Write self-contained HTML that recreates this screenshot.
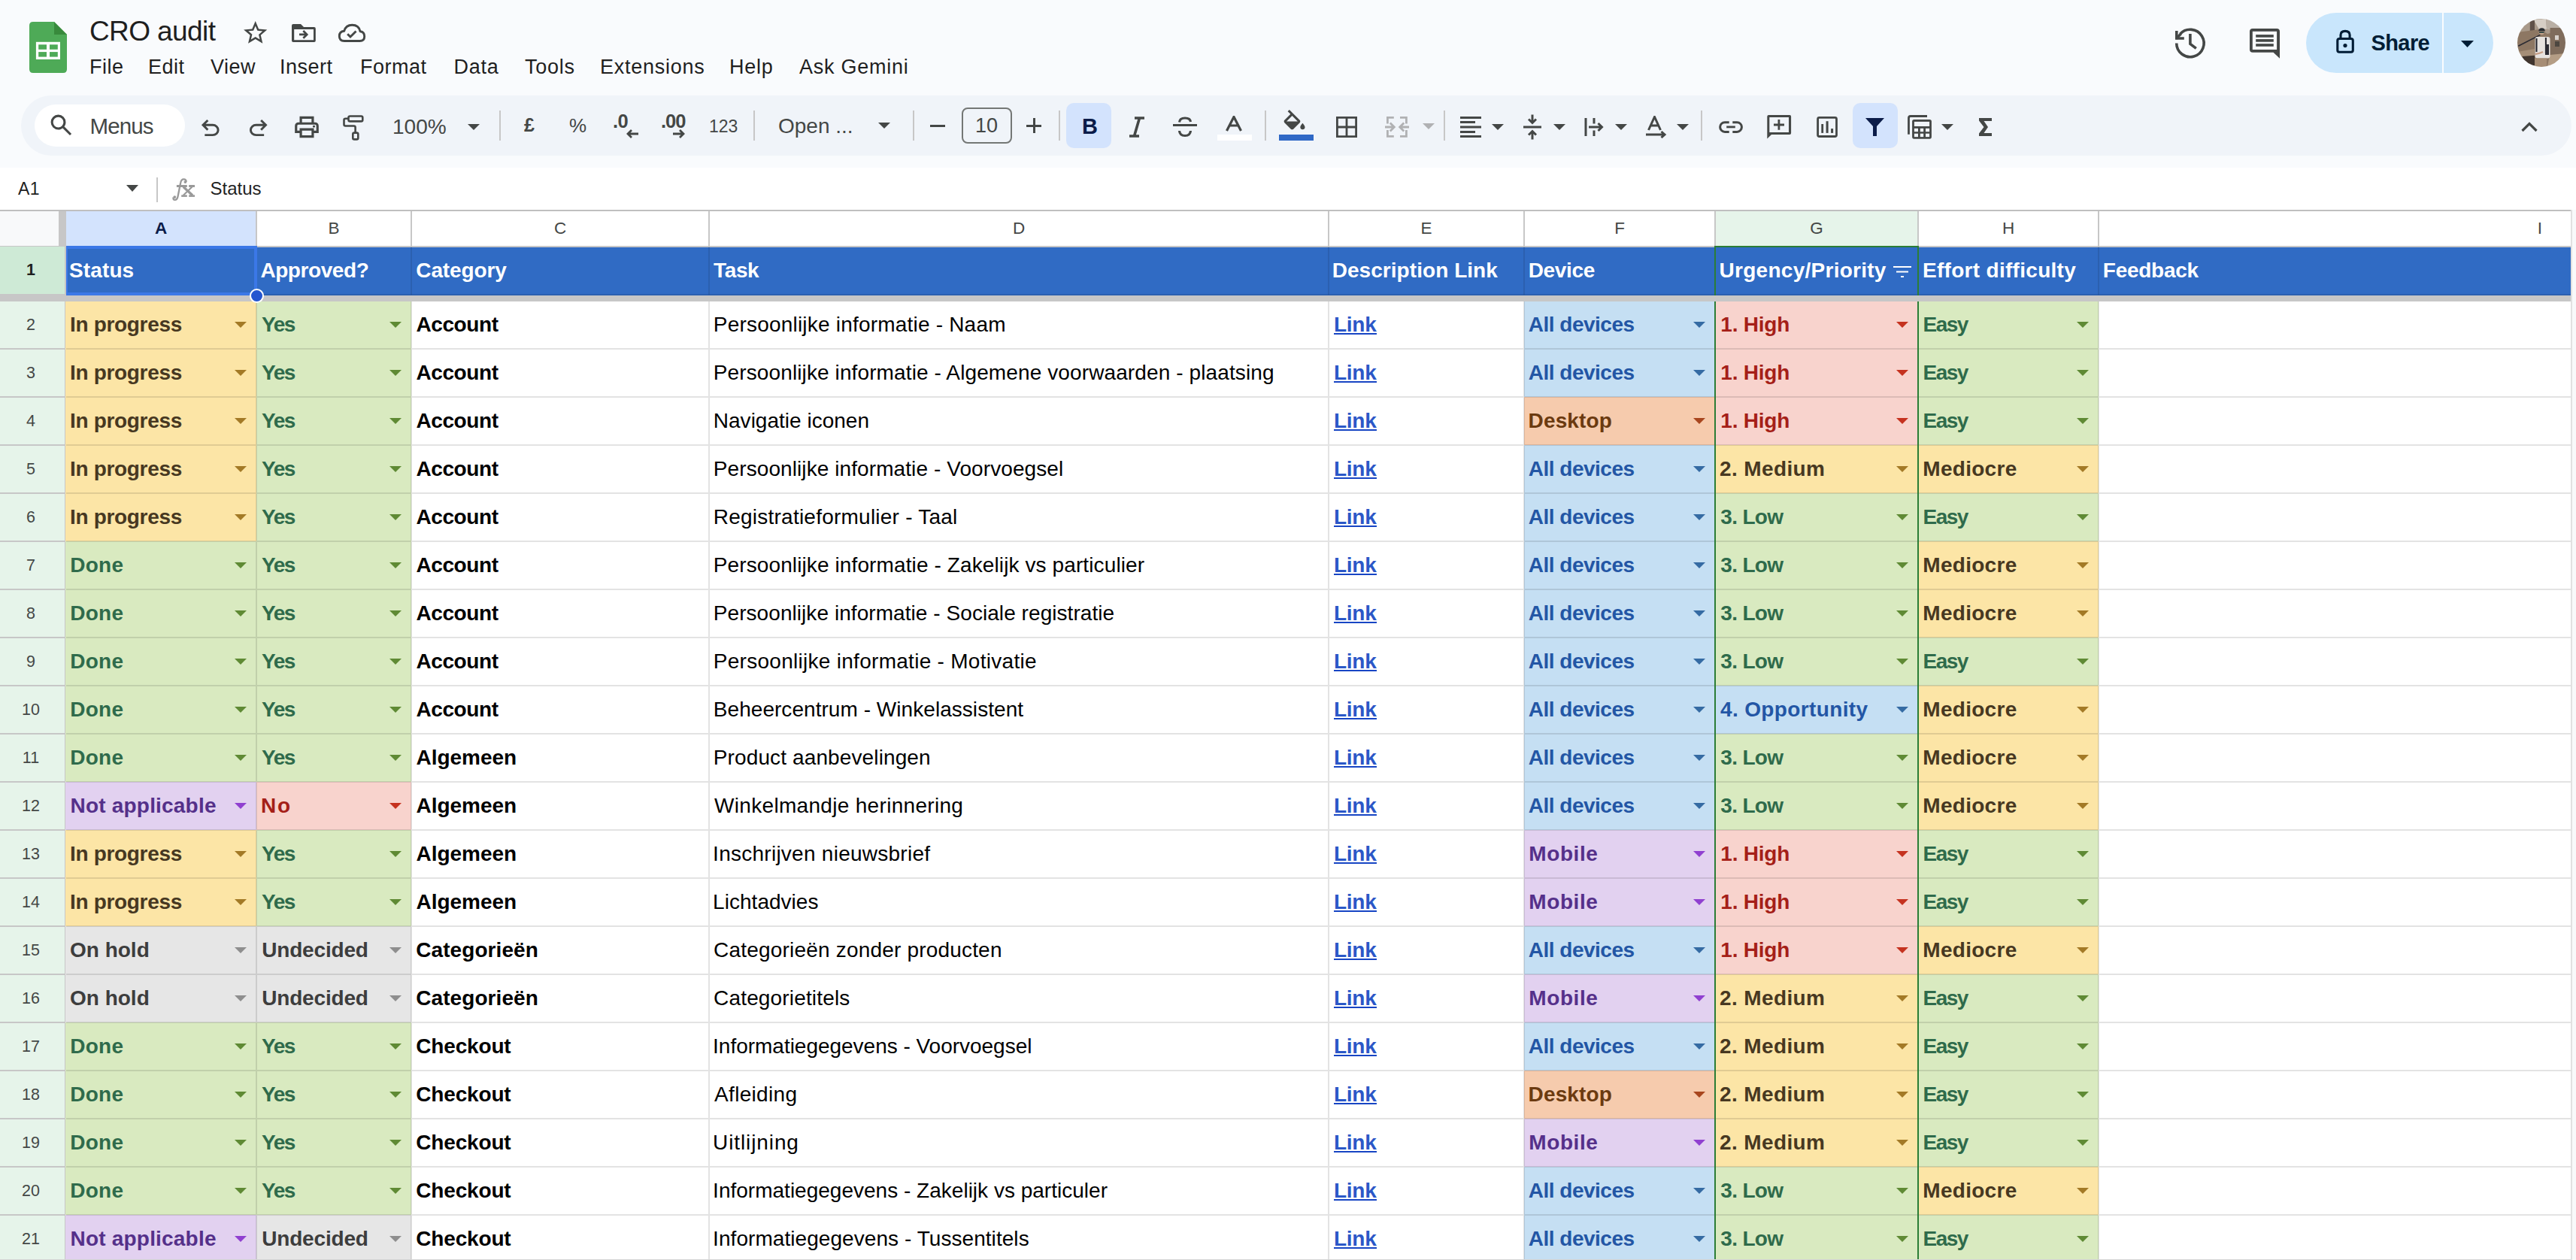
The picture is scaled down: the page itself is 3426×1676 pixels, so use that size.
<!DOCTYPE html>
<html><head><meta charset="utf-8"><title>CRO audit</title>
<style>
html,body{margin:0;padding:0;}
body{width:3426px;height:1676px;overflow:hidden;position:relative;font-family:"Liberation Sans",sans-serif;background:#fff;}
.t{position:absolute;white-space:nowrap;font-family:"Liberation Sans",sans-serif;}
.r{position:absolute;display:block;}
.u{text-decoration:underline;}
@media (max-width: 2400px) { html { zoom: 0.5; } }
</style></head><body>
<div class="r" style="left:0px;top:0px;width:3426px;height:223px;background:#f9fbfd;"></div>
<div class="r" style="left:0px;top:223px;width:3426px;height:1453px;background:#ffffff;"></div>
<svg class="r" style="left:39px;top:29px;" width="50" height="68" viewBox="0 0 50 68"><path d="M0 5 Q0 0 5 0 H33 L50 17 V63 Q50 68 45 68 H5 Q0 68 0 63 Z" fill="#4eaa57"/><path d="M33 0 L50 17 H33 Z" fill="#388a3c"/><rect x="8.9" y="26.8" width="32.1" height="23.2" fill="#fff"/><rect x="12.2" y="30.3" width="10.8" height="6.5" fill="#4eaa57"/><rect x="27" y="30.3" width="10.8" height="6.5" fill="#4eaa57"/><rect x="12.2" y="40.1" width="10.8" height="6.5" fill="#4eaa57"/><rect x="27" y="40.1" width="10.8" height="6.5" fill="#4eaa57"/></svg>
<div class="t" style="left:119px;top:23.18px;font-size:37px;line-height:37px;color:#1f1f1f;font-weight:400;letter-spacing:-0.6px;">CRO audit</div>
<svg class="r" style="left:321.2px;top:25.3px;" width="37.4" height="37.4" viewBox="0 0 24 24"><path d="M22 9.24l-7.19-.62L12 2 9.19 8.63 2 9.24l5.46 4.73L5.82 21 12 17.27 18.18 21l-1.63-7.03L22 9.24zM12 15.4l-3.76 2.27 1-4.28-3.32-2.88 4.38-.38L12 6.1l1.71 4.04 4.38.38-3.32 2.88 1 4.28L12 15.4z" fill="#444746"/></svg>
<svg class="r" style="left:380px;top:25px;" width="50" height="40" viewBox="380 25 50 40"><path fill-rule="evenodd" d="M390 32 H400 L404 36 H417.8 Q419.8 36 419.8 38 V54 Q419.8 56 417.8 56 H390 Q388 56 388 54 V34 Q388 32 390 32 Z M391.2 38.9 H417 V53.2 H391.2 Z" fill="#444746"/><path d="M398 45.9 H406.5 M403.3 41 L408.2 45.9 L403.3 50.8" fill="none" stroke="#444746" stroke-width="2.7"/></svg>
<svg class="r" style="left:449px;top:31px;" width="38" height="26" viewBox="0 0 38 26"><path d="M9 23.5 Q2.3 23.5 2.3 17 Q2.3 11 8.7 10.3 Q11 2.3 19.3 2.3 Q28.3 2.3 30 10.7 Q35.7 11.3 35.7 17.5 Q35.7 23.5 29.5 23.5 Z" fill="none" stroke="#444746" stroke-width="2.9" stroke-linejoin="round"/><path d="M13.2 14.2 L17 18 L24.5 10.5" fill="none" stroke="#444746" stroke-width="2.9"/></svg>
<div class="t" style="left:119px;top:76.14px;font-size:27px;line-height:27px;color:#1f1f1f;font-weight:400;letter-spacing:0.5px;">File</div>
<div class="t" style="left:197px;top:76.14px;font-size:27px;line-height:27px;color:#1f1f1f;font-weight:400;letter-spacing:0.5px;">Edit</div>
<div class="t" style="left:280px;top:76.14px;font-size:27px;line-height:27px;color:#1f1f1f;font-weight:400;letter-spacing:0.5px;">View</div>
<div class="t" style="left:372px;top:76.14px;font-size:27px;line-height:27px;color:#1f1f1f;font-weight:400;letter-spacing:0.5px;">Insert</div>
<div class="t" style="left:479px;top:76.14px;font-size:27px;line-height:27px;color:#1f1f1f;font-weight:400;letter-spacing:0.5px;">Format</div>
<div class="t" style="left:603.5px;top:76.14px;font-size:27px;line-height:27px;color:#1f1f1f;font-weight:400;letter-spacing:0.75px;">Data</div>
<div class="t" style="left:698px;top:76.14px;font-size:27px;line-height:27px;color:#1f1f1f;font-weight:400;letter-spacing:0.75px;">Tools</div>
<div class="t" style="left:798px;top:76.14px;font-size:27px;line-height:27px;color:#1f1f1f;font-weight:400;letter-spacing:0.75px;">Extensions</div>
<div class="t" style="left:970px;top:76.14px;font-size:27px;line-height:27px;color:#1f1f1f;font-weight:400;letter-spacing:0.75px;">Help</div>
<div class="t" style="left:1063px;top:76.14px;font-size:27px;line-height:27px;color:#1f1f1f;font-weight:400;letter-spacing:0.75px;">Ask Gemini</div>
<svg class="r" style="left:2880px;top:25px;" width="60" height="65" viewBox="0 0 60 65"><path d="M14.7 32.5 A18.2 18.2 0 1 0 19.5 20.2" fill="none" stroke="#444746" stroke-width="3.6"/><path d="M14.8 16 V26 H24.8" fill="none" stroke="#444746" stroke-width="3.6"/><path d="M14 26.5 L20.5 20" stroke="#444746" stroke-width="3.6"/><path d="M32.9 20 V33.3 L40.8 39.4" fill="none" stroke="#444746" stroke-width="3.6"/></svg>
<svg class="r" style="left:2990px;top:36px;" width="44" height="44" viewBox="0 0 44 44"><path d="M6 2 H38 Q42 2 42 6 V41.8 L33.5 33.7 H6 Q2 33.7 2 29.7 V6 Q2 2 6 2 Z" fill="#444746"/><rect x="5.8" y="5.8" width="32.3" height="24.2" fill="#f9fbfd"/><rect x="10.2" y="10.1" width="23.6" height="3.6" fill="#444746"/><rect x="10.2" y="16.1" width="23.6" height="3.6" fill="#444746"/><rect x="10.2" y="22.2" width="23.6" height="3.6" fill="#444746"/></svg>
<div class="r" style="left:3067px;top:17px;width:249px;height:80px;background:#c9e6fc;border-radius:40px;"></div>
<div class="r" style="left:3247.5px;top:17px;width:2px;height:80px;background:#f9fbfd;"></div>
<svg class="r" style="left:3100px;top:35px;" width="40" height="40" viewBox="3100 35 40 40"><rect x="3108.8" y="51.5" width="20.5" height="17.7" rx="2.5" fill="none" stroke="#001d35" stroke-width="3.1"/><path d="M3113 51.5 V46.5 Q3113 41.4 3119 41.4 Q3125.1 41.4 3125.1 46.5 V51.5" fill="none" stroke="#001d35" stroke-width="3.1"/><circle cx="3119" cy="60.6" r="2.6" fill="#001d35"/></svg>
<div class="t" style="left:3153.5px;top:42.95px;font-size:29px;line-height:29px;color:#001d35;font-weight:700;letter-spacing:-0.6px;">Share</div>
<svg class="r" style="left:3273px;top:54px;" width="17" height="10" viewBox="0 0 17 10"><path d="M0 0 H17 L8.5 9 Z" fill="#001d35"/></svg>
<svg class="r" style="left:3348px;top:25px;" width="64" height="64" viewBox="0 0 64 64"><defs><clipPath id="av"><circle cx="32" cy="32" r="32"/></clipPath><filter id="bl"><feGaussianBlur stdDeviation="0.6"/></filter></defs><g clip-path="url(#av)"><g filter="url(#bl)"><rect width="64" height="64" fill="#97806b"/><rect x="0" y="0" width="64" height="20" fill="#a8998a"/><polygon points="21.7,1.6 37.9,0 39,13.4 29.2,14.6" fill="#d6cec5"/><polygon points="38,0 64,10 64,20 39,13.4" fill="#b9afa4"/><rect x="16.8" y="2.2" width="6.2" height="15.5" fill="#5e5148"/><polygon points="0,18 30,14 40,20 64,14 64,64 0,64" fill="#8d7763"/><rect x="43.5" y="12" width="20.5" height="37" fill="#7f6c5b"/><rect x="50" y="22" width="5" height="6" fill="#d8d2cc"/><rect x="50" y="30" width="6" height="7" fill="#4d4640"/><polygon points="0,44 23,40 23,64 0,64" fill="#a58e77"/><polygon points="43,48 64,46 64,64 40,64" fill="#b49d85"/><polygon points="6.2,50 23,48.8 23,62.4 10.6,60" fill="#40362f"/><path d="M1.2 36.3 L30.4 21.4" stroke="#2a2a33" stroke-width="1.6"/><rect x="23.6" y="24" width="19.9" height="28.5" rx="3" fill="#e6e2df"/><path d="M25.5 26 V44 M37.9 25 V46" stroke="#22242c" stroke-width="2"/><rect x="37" y="34" width="5" height="14" fill="#2a2b33"/><circle cx="32.3" cy="17.5" r="3.6" fill="#c9a78f"/><path d="M28.2 16.5 Q28.5 12.3 32.5 12.3 Q36.6 12.3 36.8 16.5 Z" fill="#2b2d33"/><rect x="29" y="17.3" width="6.6" height="1.6" fill="#1f3b3a"/><rect x="23" y="52.5" width="16" height="12" fill="#a68d74"/><path d="M24 47 Q30 46 34 44" stroke="#c69d84" stroke-width="2.4" fill="none"/></g></g></svg>
<div class="r" style="left:28px;top:127px;width:3392px;height:80px;background:#f0f4f9;border-radius:40px;"></div>
<div class="r" style="left:46px;top:139px;width:200px;height:56px;background:#ffffff;border-radius:28px;"></div>
<svg class="r" style="left:63.3px;top:148.3px;" width="36.7" height="36.7" viewBox="0 -960 960 960"><path d="M784-120 532-372q-30 24-69 38t-83 14q-109 0-184.5-75.5T120-580q0-109 75.5-184.5T380-840q109 0 184.5 75.5T640-580q0 44-14 83t-38 69l252 252-56 56ZM380-400q75 0 127.5-52.5T560-580q0-75-52.5-127.5T380-760q-75 0-127.5 52.5T200-580q0 75 52.5 127.5T380-400Z" fill="#444746"/></svg>
<div class="t" style="left:119.5px;top:152.53px;font-size:29.5px;line-height:29.5px;color:#444746;font-weight:400;letter-spacing:-0.9px;">Menus</div>
<svg class="r" style="left:262.4px;top:153.1px;" width="35.5" height="35.5" viewBox="0 -960 960 960"><path d="M280-200v-80h284q63 0 109.5-40T720-420q0-60-46.5-100T564-560H312l104 104-56 56-200-200 200-200 56 56-104 104h252q97 0 166.5 63T800-420q0 94-69.5 157T564-200H280Z" fill="#444746"/></svg>
<svg class="r" style="left:326.1px;top:153.1px;" width="35.5" height="35.5" viewBox="0 -960 960 960"><path d="M396-200q-97 0-166.5-63T160-420q0-94 69.5-157T396-640h252L544-744l56-56 200 200-200 200-56-56 104-104H396q-63 0-109.5 40T240-420q0 60 46.5 100T396-280h284v80H396Z" fill="#444746"/></svg>
<svg class="r" style="left:388.9px;top:150.2px;" width="38" height="38" viewBox="0 -960 960 960"><path d="M640-640v-120H320v120h-80v-200h480v200h-80Zm-480 80h640-640Zm560 100q17 0 28.5-11.5T760-500q0-17-11.5-28.5T720-540q-17 0-28.5 11.5T680-500q0 17 11.5 28.5T720-460Zm-80 260v-160H320v160h320Zm80 80H240v-160H80v-240q0-51 35-85.5t85-34.5h560q51 0 85.5 34.5T880-520v240H720v160Zm80-240v-160q0-17-11.5-28.5T760-560H200q-17 0-28.5 11.5T160-520v160h80v-80h480v80h80Z" fill="#444746"/></svg>
<svg class="r" style="left:450px;top:148px;" width="40" height="42" viewBox="450 148 40 42"><rect x="463.5" y="154.5" width="18.8" height="6.9" rx="2" fill="none" stroke="#444746" stroke-width="2.6"/><path d="M463.5 157.8 H459.5 Q457.5 157.8 457.5 159.8 V165.5 Q457.5 167.5 459.5 167.5 H470.6 Q472.6 167.5 472.6 169.5 V176.6" fill="none" stroke="#444746" stroke-width="2.6"/><rect x="469.3" y="176.6" width="7" height="8.8" rx="2" fill="none" stroke="#444746" stroke-width="2.6"/></svg>
<div class="t" style="left:522px;top:155.30px;font-size:28px;line-height:28px;color:#444746;font-weight:400;letter-spacing:0px;">100%</div>
<svg class="r" style="left:622px;top:165px;" width="16" height="8" viewBox="0 0 16 8"><path d="M0 0 H16 L8.0 8 Z" fill="#444746"/></svg>
<div class="r" style="left:664px;top:147px;width:2px;height:40px;background:#c7c7c7;"></div>
<div class="t" style="left:697px;top:154.34px;font-size:25px;line-height:25px;color:#444746;font-weight:700;letter-spacing:0px;">£</div>
<div class="t" style="left:757px;top:153.99px;font-size:26px;line-height:26px;color:#444746;font-weight:400;letter-spacing:0px;">%</div>
<div class="t" style="left:815px;top:149.21px;font-size:25.5px;line-height:25.5px;color:#444746;font-weight:700;letter-spacing:-0.5px;">.0</div>
<svg class="r" style="left:832px;top:171px;" width="18" height="14" viewBox="0 0 18 14"><path d="M17 7 H3 M8 2 L3 7 L8 12" fill="none" stroke="#444746" stroke-width="2.8"/></svg>
<div class="t" style="left:879px;top:149.21px;font-size:25.5px;line-height:25.5px;color:#444746;font-weight:700;letter-spacing:-1px;">.00</div>
<svg class="r" style="left:894px;top:171px;" width="18" height="14" viewBox="0 0 18 14"><path d="M1 7 H15 M10 2 L15 7 L10 12" fill="none" stroke="#444746" stroke-width="2.8"/></svg>
<div class="t" style="left:943px;top:156.53px;font-size:23px;line-height:23px;color:#444746;font-weight:400;letter-spacing:0px;">123</div>
<div class="r" style="left:1002px;top:147px;width:2px;height:40px;background:#c7c7c7;"></div>
<div class="t" style="left:1035px;top:153.80px;font-size:28px;line-height:28px;color:#444746;font-weight:400;letter-spacing:0px;">Open ...</div>
<svg class="r" style="left:1168px;top:163px;" width="16" height="8" viewBox="0 0 16 8"><path d="M0 0 H16 L8.0 8 Z" fill="#444746"/></svg>
<div class="r" style="left:1214px;top:147px;width:2px;height:40px;background:#c7c7c7;"></div>
<div class="r" style="left:1237px;top:166px;width:20px;height:3px;background:#444746;"></div>
<div class="r" style="left:1279px;top:143px;width:67px;height:48px;background:transparent;border:2px solid #747775;border-radius:8px;box-sizing:border-box;"></div>
<div class="t" style="left:1297px;top:154.14px;font-size:27px;line-height:27px;color:#444746;font-weight:400;letter-spacing:0px;">10</div>
<div class="r" style="left:1365px;top:165.5px;width:20px;height:3px;background:#444746;"></div>
<div class="r" style="left:1373.5px;top:157px;width:3px;height:20px;background:#444746;"></div>
<div class="r" style="left:1408px;top:147px;width:2px;height:40px;background:#c7c7c7;"></div>
<div class="r" style="left:1418px;top:137px;width:60px;height:60px;background:#d3e3fd;border-radius:10px;"></div>
<div class="t" style="left:1439px;top:154.45px;font-size:29px;line-height:29px;color:#0b1c49;font-weight:700;letter-spacing:0px;">B</div>
<svg class="r" style="left:1500px;top:155px;" width="24" height="28" viewBox="0 0 24 28"><path d="M9 2 H22 M2 26 H15 M15.5 2 L8.5 26" fill="none" stroke="#444746" stroke-width="3.6"/></svg>
<svg class="r" style="left:1559px;top:155px;" width="34" height="28" viewBox="0 0 34 28"><path d="M1 11.5 H33" stroke="#444746" stroke-width="3"/><path d="M9.5 7.5 Q10 2 17 2 Q24 2 24.5 7" fill="none" stroke="#444746" stroke-width="3.2"/><path d="M9.5 19 Q10 25.5 17 25.5 Q24 25.5 24.5 19" fill="none" stroke="#444746" stroke-width="3.2"/></svg>
<svg class="r" style="left:1630px;top:154px;" width="22" height="21" viewBox="0 0 22 21"><path d="M1.5 20 L11 1.5 L20.5 20 M5.5 13 H16.5" fill="none" stroke="#444746" stroke-width="3.2"/></svg>
<div class="r" style="left:1619px;top:179px;width:46px;height:8px;background:#ffffff;"></div>
<div class="r" style="left:1682px;top:147px;width:2px;height:40px;background:#c7c7c7;"></div>
<svg class="r" style="left:1702.5px;top:145.5px;" width="37.2" height="37.2" viewBox="0 0 24 24"><path d="M16.56 8.94L7.62 0 6.21 1.41l2.38 2.38-5.15 5.15c-.59.59-.59 1.54 0 2.12l5.5 5.5c.29.29.68.44 1.06.44s.77-.15 1.06-.44l5.5-5.5c.59-.58.59-1.53 0-2.12zM5.21 10L10 5.21 14.79 10H5.21zM19 11.5s-2 2.17-2 3.5c0 1.1.9 2 2 2s2-.9 2-2c0-1.33-2-3.5-2-3.5z" fill="#444746"/></svg>
<div class="r" style="left:1701px;top:179px;width:46px;height:8px;background:#2f68c6;"></div>
<svg class="r" style="left:1777px;top:155px;" width="28" height="28" viewBox="0 0 28 28"><path d="M1.4 1.4 H26.6 V26.6 H1.4 Z M14 1.4 V26.6 M1.4 14 H26.6" fill="none" stroke="#444746" stroke-width="2.8"/></svg>
<svg class="r" style="left:1838px;top:150px;" width="40" height="38" viewBox="1838 150 40 38"><path d="M1853.8 156.4 H1845.4 V164.5 M1845.4 173 V181.4 H1853.8 M1862 156.4 H1870.4 V164.5 M1870.4 173 V181.4 H1862" fill="none" stroke="#b0b1b3" stroke-width="2.8"/><path d="M1842 169 H1853 M1848.8 163.5 L1854.3 169 L1848.8 174.5 M1874 169 H1863 M1867.2 163.5 L1861.7 169 L1867.2 174.5" fill="none" stroke="#b0b1b3" stroke-width="2.8"/></svg>
<svg class="r" style="left:1892px;top:164px;" width="16" height="8" viewBox="0 0 16 8"><path d="M0 0 H16 L8.0 8 Z" fill="#b0b1b3"/></svg>
<div class="r" style="left:1920px;top:147px;width:2px;height:40px;background:#c7c7c7;"></div>
<svg class="r" style="left:1942px;top:155px;" width="28" height="28" viewBox="0 0 28 28"><path d="M0 1.5 H28 M0 7.5 H20 M0 14 H28 M0 20.5 H20 M0 26.5 H28" stroke="#444746" stroke-width="3"/></svg>
<svg class="r" style="left:1984px;top:164.5px;" width="16" height="8" viewBox="0 0 16 8"><path d="M0 0 H16 L8.0 8 Z" fill="#444746"/></svg>
<svg class="r" style="left:2025px;top:152px;" width="26" height="34" viewBox="0 0 26 34"><path d="M1 17 H25" stroke="#444746" stroke-width="3"/><path d="M13 0.5 V10.5 M8 6.5 L13 11.5 L18 6.5 M13 33.5 V23.5 M8 27.5 L13 22.5 L18 27.5" fill="none" stroke="#444746" stroke-width="3"/></svg>
<svg class="r" style="left:2066px;top:164.5px;" width="16" height="8" viewBox="0 0 16 8"><path d="M0 0 H16 L8.0 8 Z" fill="#444746"/></svg>
<svg class="r" style="left:2107px;top:156px;" width="26" height="26" viewBox="0 0 26 26"><path d="M2 1 V25" stroke="#444746" stroke-width="3"/><path d="M13 1 V8.5 M13 17.5 V25 M6 13 H23 M18.5 8 L23.5 13 L18.5 18" fill="none" stroke="#444746" stroke-width="3"/></svg>
<svg class="r" style="left:2148px;top:164.5px;" width="16" height="8" viewBox="0 0 16 8"><path d="M0 0 H16 L8.0 8 Z" fill="#444746"/></svg>
<svg class="r" style="left:2189px;top:154px;" width="28" height="30" viewBox="0 0 28 30"><path d="M3.5 19 L11.5 1.5 L19.5 19 M6.5 13 H16.5" fill="none" stroke="#444746" stroke-width="3"/><path d="M0 25 H24 M20.5 21 L25 25 L20.5 29" fill="none" stroke="#444746" stroke-width="3"/></svg>
<svg class="r" style="left:2230px;top:164.5px;" width="16" height="8" viewBox="0 0 16 8"><path d="M0 0 H16 L8.0 8 Z" fill="#444746"/></svg>
<div class="r" style="left:2262px;top:147px;width:2px;height:40px;background:#c7c7c7;"></div>
<svg class="r" style="left:2280px;top:150px;" width="45" height="35" viewBox="2280 150 45 35"><path d="M2299.7 162.7 H2294 A6.35 6.35 0 0 0 2294 175.4 H2299.7 M2304.3 162.7 H2310.1 A6.35 6.35 0 0 1 2310.1 175.4 H2304.3" fill="none" stroke="#444746" stroke-width="3"/><path d="M2296.2 168.9 H2307.8" stroke="#444746" stroke-width="2.8"/></svg>
<svg class="r" style="left:2345px;top:148px;" width="42" height="40" viewBox="2345 148 42 40"><path fill-rule="evenodd" d="M2352.3 152.9 H2380.1 Q2382.1 152.9 2382.1 154.9 V176.9 Q2382.1 178.9 2380.1 178.9 H2356 L2350.3 184.4 V154.9 Q2350.3 152.9 2352.3 152.9 Z M2353.3 156 V175.9 H2379 V156 Z" fill="#444746"/><path d="M2365.9 159 V172.8 M2359 166 H2373" stroke="#444746" stroke-width="2.8"/></svg>
<svg class="r" style="left:2410px;top:150px;" width="40" height="40" viewBox="2410 150 40 40"><rect x="2417.6" y="156.4" width="24.9" height="25.1" rx="2" fill="none" stroke="#444746" stroke-width="2.8"/><rect x="2422.3" y="165" width="2.8" height="11.9" fill="#444746"/><rect x="2428.6" y="161.2" width="3" height="15.7" fill="#444746"/><rect x="2435.1" y="171.1" width="3" height="5.8" fill="#444746"/></svg>
<div class="r" style="left:2464px;top:137px;width:60px;height:60px;background:#d3e3fd;border-radius:10px;"></div>
<svg class="r" style="left:2481px;top:157px;" width="25" height="24" viewBox="0 0 25 24"><path d="M0 0 H25 L15 11 V24 H10 V11 Z" fill="#0b1c49"/></svg>
<svg class="r" style="left:2530px;top:145px;" width="50" height="50" viewBox="2530 145 50 50"><path d="M2563 154.5 H2541 Q2538.5 154.5 2538.5 157 V178.7" fill="none" stroke="#444746" stroke-width="2.8"/><rect x="2543.1" y="159.1" width="25.8" height="25.6" rx="2.6" fill="#444746"/><rect x="2545.9" y="161.9" width="20.2" height="6.1" fill="#f0f4f9"/><rect x="2545.9" y="170.8" width="5.1" height="4.4" fill="#f0f4f9"/><rect x="2553.8" y="170.8" width="4.4" height="4.4" fill="#f0f4f9"/><rect x="2561" y="170.8" width="5.1" height="4.4" fill="#f0f4f9"/><rect x="2545.9" y="177.7" width="5.1" height="4.4" fill="#f0f4f9"/><rect x="2553.8" y="177.7" width="4.4" height="4.4" fill="#f0f4f9"/><rect x="2561" y="177.7" width="5.1" height="4.4" fill="#f0f4f9"/></svg>
<svg class="r" style="left:2582px;top:165px;" width="16" height="8" viewBox="0 0 16 8"><path d="M0 0 H16 L8.0 8 Z" fill="#444746"/></svg>
<svg class="r" style="left:2632px;top:157px;" width="18" height="24" viewBox="0 0 18 24"><path d="M0 0 H17 V4 H6.5 L12 12 L6.5 20 H17 V24 H0 V20.5 L6.5 12 L0 3.5 Z" fill="#444746"/></svg>
<svg class="r" style="left:3353px;top:162px;" width="22" height="14" viewBox="0 0 22 14"><path d="M1.5 12 L11 2.5 L20.5 12" fill="none" stroke="#444746" stroke-width="3.2"/></svg>
<div class="t" style="left:24px;top:239.53px;font-size:23px;line-height:23px;color:#1f1f1f;font-weight:400;letter-spacing:0.5px;">A1</div>
<svg class="r" style="left:168px;top:246px;" width="16" height="9" viewBox="0 0 16 9"><path d="M0 0 H16 L8.0 9 Z" fill="#444746"/></svg>
<div class="r" style="left:208px;top:235.5px;width:2px;height:33px;background:#c7c7c7;"></div>
<svg class="r" style="left:226px;top:234px;" width="36" height="36" viewBox="226 234 36 36"><path d="M247.8 241.8 Q247.5 238.3 244.5 238.3 Q241 238.3 240.2 243 L236.5 261.5 Q235.6 265.9 232.6 265.9 Q230 265.9 230.6 262.5" fill="none" stroke="#999" stroke-width="2.3"/><circle cx="246.4" cy="242.1" r="1.9" fill="#999"/><circle cx="232.3" cy="262.1" r="1.9" fill="#999"/><rect x="234.9" y="246" width="13.9" height="3" fill="#999"/><path d="M243.8 248.5 L256 259.8" stroke="#999" stroke-width="3.3"/><path d="M255.5 248.5 L243.8 259.8" stroke="#999" stroke-width="2.1"/><rect x="251.2" y="246" width="7.8" height="3" fill="#999"/><rect x="241.2" y="259.3" width="7.6" height="2.6" fill="#999"/><rect x="251.2" y="259.3" width="7.8" height="2.6" fill="#999"/></svg>
<div class="t" style="left:279.5px;top:238.68px;font-size:24px;line-height:24px;color:#1f1f1f;font-weight:400;letter-spacing:0px;">Status</div>
<div class="r" style="left:0px;top:279px;width:3419px;height:2px;background:#bfbfbf;"></div>
<div class="r" style="left:0px;top:281px;width:78px;height:46px;background:#f8f9fa;"></div>
<div class="r" style="left:78px;top:281px;width:10px;height:47px;background:#c7c7c7;"></div>
<div class="r" style="left:88px;top:281px;width:252px;height:46px;background:#d3e3fd;"></div>
<div class="r" style="left:342px;top:281px;width:204px;height:46px;background:#ffffff;"></div>
<div class="r" style="left:340px;top:281px;width:2px;height:46px;background:#c7c7c7;"></div>
<div class="r" style="left:548px;top:281px;width:394px;height:46px;background:#ffffff;"></div>
<div class="r" style="left:546px;top:281px;width:2px;height:46px;background:#c7c7c7;"></div>
<div class="r" style="left:944px;top:281px;width:822px;height:46px;background:#ffffff;"></div>
<div class="r" style="left:942px;top:281px;width:2px;height:46px;background:#c7c7c7;"></div>
<div class="r" style="left:1768px;top:281px;width:258px;height:46px;background:#ffffff;"></div>
<div class="r" style="left:1766px;top:281px;width:2px;height:46px;background:#c7c7c7;"></div>
<div class="r" style="left:2028px;top:281px;width:252px;height:46px;background:#ffffff;"></div>
<div class="r" style="left:2026px;top:281px;width:2px;height:46px;background:#c7c7c7;"></div>
<div class="r" style="left:2282px;top:281px;width:268px;height:46px;background:#e6f4ea;"></div>
<div class="r" style="left:2280px;top:281px;width:2px;height:46px;background:#c7c7c7;"></div>
<div class="r" style="left:2552px;top:281px;width:238px;height:46px;background:#ffffff;"></div>
<div class="r" style="left:2550px;top:281px;width:2px;height:46px;background:#c7c7c7;"></div>
<div class="r" style="left:2792px;top:281px;width:626px;height:46px;background:#ffffff;"></div>
<div class="r" style="left:2790px;top:281px;width:2px;height:46px;background:#c7c7c7;"></div>
<div class="r" style="left:0px;top:327px;width:3419px;height:2px;background:#c7c7c7;"></div>
<div class="t" style="left:174.0px;width:80px;text-align:center;top:293.15px;font-size:22.5px;line-height:22.5px;color:#0b1c49;font-weight:700">A</div>
<div class="t" style="left:404.0px;width:80px;text-align:center;top:293.15px;font-size:22.5px;line-height:22.5px;color:#444746;font-weight:400">B</div>
<div class="t" style="left:705.0px;width:80px;text-align:center;top:293.15px;font-size:22.5px;line-height:22.5px;color:#444746;font-weight:400">C</div>
<div class="t" style="left:1315.0px;width:80px;text-align:center;top:293.15px;font-size:22.5px;line-height:22.5px;color:#444746;font-weight:400">D</div>
<div class="t" style="left:1857.0px;width:80px;text-align:center;top:293.15px;font-size:22.5px;line-height:22.5px;color:#444746;font-weight:400">E</div>
<div class="t" style="left:2114.0px;width:80px;text-align:center;top:293.15px;font-size:22.5px;line-height:22.5px;color:#444746;font-weight:400">F</div>
<div class="t" style="left:2376.0px;width:80px;text-align:center;top:293.15px;font-size:22.5px;line-height:22.5px;color:#444746;font-weight:400">G</div>
<div class="t" style="left:2631.0px;width:80px;text-align:center;top:293.15px;font-size:22.5px;line-height:22.5px;color:#444746;font-weight:400">H</div>
<div class="t" style="left:3338px;width:80px;text-align:center;top:293.15px;font-size:22.5px;line-height:22.5px;color:#444746;font-weight:400">I</div>
<div class="r" style="left:0px;top:328px;width:86px;height:63px;background:#ceead6;"></div>
<div class="r" style="left:88px;top:329px;width:3331px;height:64px;background:#306bc4;"></div>
<div class="r" style="left:88px;top:391px;width:3331px;height:2px;background:rgba(0,0,0,0.1);"></div>
<div class="t" style="left:92px;top:346.05px;font-size:28px;line-height:28px;color:#ffffff;font-weight:700;letter-spacing:0.12px;">Status</div>
<div class="r" style="left:340px;top:328px;width:2px;height:64px;background:rgba(0,0,0,0.1);"></div>
<div class="t" style="left:346.4px;top:346.05px;font-size:28px;line-height:28px;color:#ffffff;font-weight:700;letter-spacing:-0.425px;">Approved?</div>
<div class="r" style="left:546px;top:328px;width:2px;height:64px;background:rgba(0,0,0,0.1);"></div>
<div class="t" style="left:553.3px;top:346.05px;font-size:28px;line-height:28px;color:#ffffff;font-weight:700;letter-spacing:-0.114px;">Category</div>
<div class="r" style="left:942px;top:328px;width:2px;height:64px;background:rgba(0,0,0,0.1);"></div>
<div class="t" style="left:949px;top:346.05px;font-size:28px;line-height:28px;color:#ffffff;font-weight:700;letter-spacing:-0.35px;">Task</div>
<div class="r" style="left:1766px;top:328px;width:2px;height:64px;background:rgba(0,0,0,0.1);"></div>
<div class="t" style="left:1771.7px;top:346.05px;font-size:28px;line-height:28px;color:#ffffff;font-weight:700;letter-spacing:0.053px;">Description Link</div>
<div class="r" style="left:2026px;top:328px;width:2px;height:64px;background:rgba(0,0,0,0.1);"></div>
<div class="t" style="left:2032.7px;top:346.05px;font-size:28px;line-height:28px;color:#ffffff;font-weight:700;letter-spacing:-0.35px;">Device</div>
<div class="r" style="left:2280px;top:328px;width:2px;height:64px;background:rgba(0,0,0,0.1);"></div>
<div class="t" style="left:2286.6px;top:346.05px;font-size:28px;line-height:28px;color:#ffffff;font-weight:700;letter-spacing:0.267px;">Urgency/Priority</div>
<div class="r" style="left:2550px;top:328px;width:2px;height:64px;background:rgba(0,0,0,0.1);"></div>
<div class="t" style="left:2557px;top:346.05px;font-size:28px;line-height:28px;color:#ffffff;font-weight:700;letter-spacing:0.294px;">Effort difficulty</div>
<div class="r" style="left:2790px;top:328px;width:2px;height:64px;background:rgba(0,0,0,0.1);"></div>
<div class="t" style="left:2796.8px;top:346.05px;font-size:28px;line-height:28px;color:#ffffff;font-weight:700;letter-spacing:-0.257px;">Feedback</div>
<div class="t" style="left:0;width:82px;text-align:center;top:348.80px;font-size:21.5px;line-height:21.5px;color:#1f1f1f;font-weight:700">1</div>
<svg class="r" style="left:2518px;top:354px;" width="24" height="15" viewBox="0 0 24 15"><path d="M0 1 H24 M4 7.5 H20 M10 14 H14" stroke="#ffffff" stroke-width="2.2"/></svg>
<div class="r" style="left:86px;top:281px;width:2px;height:1395px;background:#c7c7c7;"></div>
<div class="r" style="left:0px;top:400px;width:86px;height:64px;background:#e6f4ea;"></div>
<div class="t" style="left:0;width:82px;text-align:center;top:422.10px;font-size:21.5px;line-height:21.5px;color:#444746;">2</div>
<div class="r" style="left:87px;top:400px;width:254px;height:64px;background:#fce5a6;"></div>
<div class="r" style="left:341px;top:400px;width:206px;height:64px;background:#d9eac0;"></div>
<div class="r" style="left:2027px;top:400px;width:254px;height:64px;background:#c5dff3;"></div>
<div class="r" style="left:2281px;top:400px;width:270px;height:64px;background:#f8d3cd;"></div>
<div class="r" style="left:2551px;top:400px;width:240px;height:64px;background:#d9eac0;"></div>
<div class="t" style="left:93px;top:418.05px;font-size:28px;line-height:28px;color:#473821;font-weight:700;letter-spacing:-0.325px;">In progress</div>
<svg class="r" style="left:312px;top:428px;" width="16" height="8" viewBox="0 0 16 8"><path d="M0 0 H16 L8.0 8 Z" fill="#a37a26"/></svg>
<div class="t" style="left:348px;top:418.05px;font-size:28px;line-height:28px;color:#2f6b4b;font-weight:700;letter-spacing:-1.5px;">Yes</div>
<svg class="r" style="left:518px;top:428px;" width="16" height="8" viewBox="0 0 16 8"><path d="M0 0 H16 L8.0 8 Z" fill="#5f8a34"/></svg>
<div class="t" style="left:553.5px;top:418.05px;font-size:28px;line-height:28px;color:#000000;font-weight:700;letter-spacing:-0.417px;">Account</div>
<div class="t" style="left:948.8px;top:417.55px;font-size:28px;line-height:28px;color:#000000;font-weight:400;letter-spacing:0.203px;">Persoonlijke informatie - Naam</div>
<div class="t" style="left:1773.9px;top:418.05px;font-size:28px;line-height:28px;color:#2b57c7;font-weight:700;letter-spacing:-0.2px;">Link</div>
<div class="r" style="left:1774px;top:443px;width:57px;height:2px;background:#1745c4;"></div>
<div class="t" style="left:2032.75px;top:418.05px;font-size:28px;line-height:28px;color:#2356a5;font-weight:700;letter-spacing:-0.5px;">All devices</div>
<svg class="r" style="left:2252px;top:428px;" width="16" height="8" viewBox="0 0 16 8"><path d="M0 0 H16 L8.0 8 Z" fill="#356ba3"/></svg>
<div class="t" style="left:2288.3px;top:418.05px;font-size:28px;line-height:28px;color:#a51f18;font-weight:700;letter-spacing:-0.217px;">1. High</div>
<svg class="r" style="left:2522px;top:428px;" width="16" height="8" viewBox="0 0 16 8"><path d="M0 0 H16 L8.0 8 Z" fill="#c5321f"/></svg>
<div class="t" style="left:2557.5px;top:418.05px;font-size:28px;line-height:28px;color:#2f6b4b;font-weight:700;letter-spacing:-1.5px;">Easy</div>
<svg class="r" style="left:2762px;top:428px;" width="16" height="8" viewBox="0 0 16 8"><path d="M0 0 H16 L8.0 8 Z" fill="#5f8a34"/></svg>
<div class="r" style="left:0px;top:464px;width:86px;height:64px;background:#e6f4ea;"></div>
<div class="t" style="left:0;width:82px;text-align:center;top:486.10px;font-size:21.5px;line-height:21.5px;color:#444746;">3</div>
<div class="r" style="left:87px;top:464px;width:254px;height:64px;background:#fce5a6;"></div>
<div class="r" style="left:341px;top:464px;width:206px;height:64px;background:#d9eac0;"></div>
<div class="r" style="left:2027px;top:464px;width:254px;height:64px;background:#c5dff3;"></div>
<div class="r" style="left:2281px;top:464px;width:270px;height:64px;background:#f8d3cd;"></div>
<div class="r" style="left:2551px;top:464px;width:240px;height:64px;background:#d9eac0;"></div>
<div class="t" style="left:93px;top:482.05px;font-size:28px;line-height:28px;color:#473821;font-weight:700;letter-spacing:-0.325px;">In progress</div>
<svg class="r" style="left:312px;top:492px;" width="16" height="8" viewBox="0 0 16 8"><path d="M0 0 H16 L8.0 8 Z" fill="#a37a26"/></svg>
<div class="t" style="left:348px;top:482.05px;font-size:28px;line-height:28px;color:#2f6b4b;font-weight:700;letter-spacing:-1.5px;">Yes</div>
<svg class="r" style="left:518px;top:492px;" width="16" height="8" viewBox="0 0 16 8"><path d="M0 0 H16 L8.0 8 Z" fill="#5f8a34"/></svg>
<div class="t" style="left:553.5px;top:482.05px;font-size:28px;line-height:28px;color:#000000;font-weight:700;letter-spacing:-0.417px;">Account</div>
<div class="t" style="left:948.8px;top:481.55px;font-size:28px;line-height:28px;color:#000000;font-weight:400;letter-spacing:0.114px;">Persoonlijke informatie - Algemene voorwaarden - plaatsing</div>
<div class="t" style="left:1773.9px;top:482.05px;font-size:28px;line-height:28px;color:#2b57c7;font-weight:700;letter-spacing:-0.2px;">Link</div>
<div class="r" style="left:1774px;top:507px;width:57px;height:2px;background:#1745c4;"></div>
<div class="t" style="left:2032.75px;top:482.05px;font-size:28px;line-height:28px;color:#2356a5;font-weight:700;letter-spacing:-0.5px;">All devices</div>
<svg class="r" style="left:2252px;top:492px;" width="16" height="8" viewBox="0 0 16 8"><path d="M0 0 H16 L8.0 8 Z" fill="#356ba3"/></svg>
<div class="t" style="left:2288.3px;top:482.05px;font-size:28px;line-height:28px;color:#a51f18;font-weight:700;letter-spacing:-0.217px;">1. High</div>
<svg class="r" style="left:2522px;top:492px;" width="16" height="8" viewBox="0 0 16 8"><path d="M0 0 H16 L8.0 8 Z" fill="#c5321f"/></svg>
<div class="t" style="left:2557.5px;top:482.05px;font-size:28px;line-height:28px;color:#2f6b4b;font-weight:700;letter-spacing:-1.5px;">Easy</div>
<svg class="r" style="left:2762px;top:492px;" width="16" height="8" viewBox="0 0 16 8"><path d="M0 0 H16 L8.0 8 Z" fill="#5f8a34"/></svg>
<div class="r" style="left:0px;top:528px;width:86px;height:64px;background:#e6f4ea;"></div>
<div class="t" style="left:0;width:82px;text-align:center;top:550.10px;font-size:21.5px;line-height:21.5px;color:#444746;">4</div>
<div class="r" style="left:87px;top:528px;width:254px;height:64px;background:#fce5a6;"></div>
<div class="r" style="left:341px;top:528px;width:206px;height:64px;background:#d9eac0;"></div>
<div class="r" style="left:2027px;top:528px;width:254px;height:64px;background:#f6cbad;"></div>
<div class="r" style="left:2281px;top:528px;width:270px;height:64px;background:#f8d3cd;"></div>
<div class="r" style="left:2551px;top:528px;width:240px;height:64px;background:#d9eac0;"></div>
<div class="t" style="left:93px;top:546.05px;font-size:28px;line-height:28px;color:#473821;font-weight:700;letter-spacing:-0.325px;">In progress</div>
<svg class="r" style="left:312px;top:556px;" width="16" height="8" viewBox="0 0 16 8"><path d="M0 0 H16 L8.0 8 Z" fill="#a37a26"/></svg>
<div class="t" style="left:348px;top:546.05px;font-size:28px;line-height:28px;color:#2f6b4b;font-weight:700;letter-spacing:-1.5px;">Yes</div>
<svg class="r" style="left:518px;top:556px;" width="16" height="8" viewBox="0 0 16 8"><path d="M0 0 H16 L8.0 8 Z" fill="#5f8a34"/></svg>
<div class="t" style="left:553.5px;top:546.05px;font-size:28px;line-height:28px;color:#000000;font-weight:700;letter-spacing:-0.417px;">Account</div>
<div class="t" style="left:948.8px;top:545.55px;font-size:28px;line-height:28px;color:#000000;font-weight:400;letter-spacing:0.013px;">Navigatie iconen</div>
<div class="t" style="left:1773.9px;top:546.05px;font-size:28px;line-height:28px;color:#2b57c7;font-weight:700;letter-spacing:-0.2px;">Link</div>
<div class="r" style="left:1774px;top:571px;width:57px;height:2px;background:#1745c4;"></div>
<div class="t" style="left:2032.5px;top:546.05px;font-size:28px;line-height:28px;color:#6b3a10;font-weight:700;letter-spacing:0.167px;">Desktop</div>
<svg class="r" style="left:2252px;top:556px;" width="16" height="8" viewBox="0 0 16 8"><path d="M0 0 H16 L8.0 8 Z" fill="#a8461e"/></svg>
<div class="t" style="left:2288.3px;top:546.05px;font-size:28px;line-height:28px;color:#a51f18;font-weight:700;letter-spacing:-0.217px;">1. High</div>
<svg class="r" style="left:2522px;top:556px;" width="16" height="8" viewBox="0 0 16 8"><path d="M0 0 H16 L8.0 8 Z" fill="#c5321f"/></svg>
<div class="t" style="left:2557.5px;top:546.05px;font-size:28px;line-height:28px;color:#2f6b4b;font-weight:700;letter-spacing:-1.5px;">Easy</div>
<svg class="r" style="left:2762px;top:556px;" width="16" height="8" viewBox="0 0 16 8"><path d="M0 0 H16 L8.0 8 Z" fill="#5f8a34"/></svg>
<div class="r" style="left:0px;top:592px;width:86px;height:64px;background:#e6f4ea;"></div>
<div class="t" style="left:0;width:82px;text-align:center;top:614.10px;font-size:21.5px;line-height:21.5px;color:#444746;">5</div>
<div class="r" style="left:87px;top:592px;width:254px;height:64px;background:#fce5a6;"></div>
<div class="r" style="left:341px;top:592px;width:206px;height:64px;background:#d9eac0;"></div>
<div class="r" style="left:2027px;top:592px;width:254px;height:64px;background:#c5dff3;"></div>
<div class="r" style="left:2281px;top:592px;width:270px;height:64px;background:#fce5a6;"></div>
<div class="r" style="left:2551px;top:592px;width:240px;height:64px;background:#fce5a6;"></div>
<div class="t" style="left:93px;top:610.05px;font-size:28px;line-height:28px;color:#473821;font-weight:700;letter-spacing:-0.325px;">In progress</div>
<svg class="r" style="left:312px;top:620px;" width="16" height="8" viewBox="0 0 16 8"><path d="M0 0 H16 L8.0 8 Z" fill="#a37a26"/></svg>
<div class="t" style="left:348px;top:610.05px;font-size:28px;line-height:28px;color:#2f6b4b;font-weight:700;letter-spacing:-1.5px;">Yes</div>
<svg class="r" style="left:518px;top:620px;" width="16" height="8" viewBox="0 0 16 8"><path d="M0 0 H16 L8.0 8 Z" fill="#5f8a34"/></svg>
<div class="t" style="left:553.5px;top:610.05px;font-size:28px;line-height:28px;color:#000000;font-weight:700;letter-spacing:-0.417px;">Account</div>
<div class="t" style="left:948.8px;top:609.55px;font-size:28px;line-height:28px;color:#000000;font-weight:400;letter-spacing:0.089px;">Persoonlijke informatie - Voorvoegsel</div>
<div class="t" style="left:1773.9px;top:610.05px;font-size:28px;line-height:28px;color:#2b57c7;font-weight:700;letter-spacing:-0.2px;">Link</div>
<div class="r" style="left:1774px;top:635px;width:57px;height:2px;background:#1745c4;"></div>
<div class="t" style="left:2032.75px;top:610.05px;font-size:28px;line-height:28px;color:#2356a5;font-weight:700;letter-spacing:-0.5px;">All devices</div>
<svg class="r" style="left:2252px;top:620px;" width="16" height="8" viewBox="0 0 16 8"><path d="M0 0 H16 L8.0 8 Z" fill="#356ba3"/></svg>
<div class="t" style="left:2287px;top:610.05px;font-size:28px;line-height:28px;color:#473821;font-weight:700;letter-spacing:0.387px;">2. Medium</div>
<svg class="r" style="left:2522px;top:620px;" width="16" height="8" viewBox="0 0 16 8"><path d="M0 0 H16 L8.0 8 Z" fill="#a37a26"/></svg>
<div class="t" style="left:2557.3px;top:610.05px;font-size:28px;line-height:28px;color:#473821;font-weight:700;letter-spacing:0.286px;">Mediocre</div>
<svg class="r" style="left:2762px;top:620px;" width="16" height="8" viewBox="0 0 16 8"><path d="M0 0 H16 L8.0 8 Z" fill="#a37a26"/></svg>
<div class="r" style="left:0px;top:656px;width:86px;height:64px;background:#e6f4ea;"></div>
<div class="t" style="left:0;width:82px;text-align:center;top:678.10px;font-size:21.5px;line-height:21.5px;color:#444746;">6</div>
<div class="r" style="left:87px;top:656px;width:254px;height:64px;background:#fce5a6;"></div>
<div class="r" style="left:341px;top:656px;width:206px;height:64px;background:#d9eac0;"></div>
<div class="r" style="left:2027px;top:656px;width:254px;height:64px;background:#c5dff3;"></div>
<div class="r" style="left:2281px;top:656px;width:270px;height:64px;background:#d9eac0;"></div>
<div class="r" style="left:2551px;top:656px;width:240px;height:64px;background:#d9eac0;"></div>
<div class="t" style="left:93px;top:674.05px;font-size:28px;line-height:28px;color:#473821;font-weight:700;letter-spacing:-0.325px;">In progress</div>
<svg class="r" style="left:312px;top:684px;" width="16" height="8" viewBox="0 0 16 8"><path d="M0 0 H16 L8.0 8 Z" fill="#a37a26"/></svg>
<div class="t" style="left:348px;top:674.05px;font-size:28px;line-height:28px;color:#2f6b4b;font-weight:700;letter-spacing:-1.5px;">Yes</div>
<svg class="r" style="left:518px;top:684px;" width="16" height="8" viewBox="0 0 16 8"><path d="M0 0 H16 L8.0 8 Z" fill="#5f8a34"/></svg>
<div class="t" style="left:553.5px;top:674.05px;font-size:28px;line-height:28px;color:#000000;font-weight:700;letter-spacing:-0.417px;">Account</div>
<div class="t" style="left:948.8px;top:673.55px;font-size:28px;line-height:28px;color:#000000;font-weight:400;letter-spacing:0.231px;">Registratieformulier - Taal</div>
<div class="t" style="left:1773.9px;top:674.05px;font-size:28px;line-height:28px;color:#2b57c7;font-weight:700;letter-spacing:-0.2px;">Link</div>
<div class="r" style="left:1774px;top:699px;width:57px;height:2px;background:#1745c4;"></div>
<div class="t" style="left:2032.75px;top:674.05px;font-size:28px;line-height:28px;color:#2356a5;font-weight:700;letter-spacing:-0.5px;">All devices</div>
<svg class="r" style="left:2252px;top:684px;" width="16" height="8" viewBox="0 0 16 8"><path d="M0 0 H16 L8.0 8 Z" fill="#356ba3"/></svg>
<div class="t" style="left:2288.3px;top:674.05px;font-size:28px;line-height:28px;color:#2f6b4b;font-weight:700;letter-spacing:-0.68px;">3. Low</div>
<svg class="r" style="left:2522px;top:684px;" width="16" height="8" viewBox="0 0 16 8"><path d="M0 0 H16 L8.0 8 Z" fill="#5f8a34"/></svg>
<div class="t" style="left:2557.5px;top:674.05px;font-size:28px;line-height:28px;color:#2f6b4b;font-weight:700;letter-spacing:-1.5px;">Easy</div>
<svg class="r" style="left:2762px;top:684px;" width="16" height="8" viewBox="0 0 16 8"><path d="M0 0 H16 L8.0 8 Z" fill="#5f8a34"/></svg>
<div class="r" style="left:0px;top:720px;width:86px;height:64px;background:#e6f4ea;"></div>
<div class="t" style="left:0;width:82px;text-align:center;top:742.10px;font-size:21.5px;line-height:21.5px;color:#444746;">7</div>
<div class="r" style="left:87px;top:720px;width:254px;height:64px;background:#d9eac0;"></div>
<div class="r" style="left:341px;top:720px;width:206px;height:64px;background:#d9eac0;"></div>
<div class="r" style="left:2027px;top:720px;width:254px;height:64px;background:#c5dff3;"></div>
<div class="r" style="left:2281px;top:720px;width:270px;height:64px;background:#d9eac0;"></div>
<div class="r" style="left:2551px;top:720px;width:240px;height:64px;background:#fce5a6;"></div>
<div class="t" style="left:93.2px;top:738.05px;font-size:28px;line-height:28px;color:#2f6b4b;font-weight:700;letter-spacing:0.3px;">Done</div>
<svg class="r" style="left:312px;top:748px;" width="16" height="8" viewBox="0 0 16 8"><path d="M0 0 H16 L8.0 8 Z" fill="#5f8a34"/></svg>
<div class="t" style="left:348px;top:738.05px;font-size:28px;line-height:28px;color:#2f6b4b;font-weight:700;letter-spacing:-1.5px;">Yes</div>
<svg class="r" style="left:518px;top:748px;" width="16" height="8" viewBox="0 0 16 8"><path d="M0 0 H16 L8.0 8 Z" fill="#5f8a34"/></svg>
<div class="t" style="left:553.5px;top:738.05px;font-size:28px;line-height:28px;color:#000000;font-weight:700;letter-spacing:-0.417px;">Account</div>
<div class="t" style="left:948.8px;top:737.55px;font-size:28px;line-height:28px;color:#000000;font-weight:400;letter-spacing:0.11px;">Persoonlijke informatie - Zakelijk vs particulier</div>
<div class="t" style="left:1773.9px;top:738.05px;font-size:28px;line-height:28px;color:#2b57c7;font-weight:700;letter-spacing:-0.2px;">Link</div>
<div class="r" style="left:1774px;top:763px;width:57px;height:2px;background:#1745c4;"></div>
<div class="t" style="left:2032.75px;top:738.05px;font-size:28px;line-height:28px;color:#2356a5;font-weight:700;letter-spacing:-0.5px;">All devices</div>
<svg class="r" style="left:2252px;top:748px;" width="16" height="8" viewBox="0 0 16 8"><path d="M0 0 H16 L8.0 8 Z" fill="#356ba3"/></svg>
<div class="t" style="left:2288.3px;top:738.05px;font-size:28px;line-height:28px;color:#2f6b4b;font-weight:700;letter-spacing:-0.68px;">3. Low</div>
<svg class="r" style="left:2522px;top:748px;" width="16" height="8" viewBox="0 0 16 8"><path d="M0 0 H16 L8.0 8 Z" fill="#5f8a34"/></svg>
<div class="t" style="left:2557.3px;top:738.05px;font-size:28px;line-height:28px;color:#473821;font-weight:700;letter-spacing:0.286px;">Mediocre</div>
<svg class="r" style="left:2762px;top:748px;" width="16" height="8" viewBox="0 0 16 8"><path d="M0 0 H16 L8.0 8 Z" fill="#a37a26"/></svg>
<div class="r" style="left:0px;top:784px;width:86px;height:64px;background:#e6f4ea;"></div>
<div class="t" style="left:0;width:82px;text-align:center;top:806.10px;font-size:21.5px;line-height:21.5px;color:#444746;">8</div>
<div class="r" style="left:87px;top:784px;width:254px;height:64px;background:#d9eac0;"></div>
<div class="r" style="left:341px;top:784px;width:206px;height:64px;background:#d9eac0;"></div>
<div class="r" style="left:2027px;top:784px;width:254px;height:64px;background:#c5dff3;"></div>
<div class="r" style="left:2281px;top:784px;width:270px;height:64px;background:#d9eac0;"></div>
<div class="r" style="left:2551px;top:784px;width:240px;height:64px;background:#fce5a6;"></div>
<div class="t" style="left:93.2px;top:802.05px;font-size:28px;line-height:28px;color:#2f6b4b;font-weight:700;letter-spacing:0.3px;">Done</div>
<svg class="r" style="left:312px;top:812px;" width="16" height="8" viewBox="0 0 16 8"><path d="M0 0 H16 L8.0 8 Z" fill="#5f8a34"/></svg>
<div class="t" style="left:348px;top:802.05px;font-size:28px;line-height:28px;color:#2f6b4b;font-weight:700;letter-spacing:-1.5px;">Yes</div>
<svg class="r" style="left:518px;top:812px;" width="16" height="8" viewBox="0 0 16 8"><path d="M0 0 H16 L8.0 8 Z" fill="#5f8a34"/></svg>
<div class="t" style="left:553.5px;top:802.05px;font-size:28px;line-height:28px;color:#000000;font-weight:700;letter-spacing:-0.417px;">Account</div>
<div class="t" style="left:948.8px;top:801.55px;font-size:28px;line-height:28px;color:#000000;font-weight:400;letter-spacing:0.061px;">Persoonlijke informatie - Sociale registratie</div>
<div class="t" style="left:1773.9px;top:802.05px;font-size:28px;line-height:28px;color:#2b57c7;font-weight:700;letter-spacing:-0.2px;">Link</div>
<div class="r" style="left:1774px;top:827px;width:57px;height:2px;background:#1745c4;"></div>
<div class="t" style="left:2032.75px;top:802.05px;font-size:28px;line-height:28px;color:#2356a5;font-weight:700;letter-spacing:-0.5px;">All devices</div>
<svg class="r" style="left:2252px;top:812px;" width="16" height="8" viewBox="0 0 16 8"><path d="M0 0 H16 L8.0 8 Z" fill="#356ba3"/></svg>
<div class="t" style="left:2288.3px;top:802.05px;font-size:28px;line-height:28px;color:#2f6b4b;font-weight:700;letter-spacing:-0.68px;">3. Low</div>
<svg class="r" style="left:2522px;top:812px;" width="16" height="8" viewBox="0 0 16 8"><path d="M0 0 H16 L8.0 8 Z" fill="#5f8a34"/></svg>
<div class="t" style="left:2557.3px;top:802.05px;font-size:28px;line-height:28px;color:#473821;font-weight:700;letter-spacing:0.286px;">Mediocre</div>
<svg class="r" style="left:2762px;top:812px;" width="16" height="8" viewBox="0 0 16 8"><path d="M0 0 H16 L8.0 8 Z" fill="#a37a26"/></svg>
<div class="r" style="left:0px;top:848px;width:86px;height:64px;background:#e6f4ea;"></div>
<div class="t" style="left:0;width:82px;text-align:center;top:870.10px;font-size:21.5px;line-height:21.5px;color:#444746;">9</div>
<div class="r" style="left:87px;top:848px;width:254px;height:64px;background:#d9eac0;"></div>
<div class="r" style="left:341px;top:848px;width:206px;height:64px;background:#d9eac0;"></div>
<div class="r" style="left:2027px;top:848px;width:254px;height:64px;background:#c5dff3;"></div>
<div class="r" style="left:2281px;top:848px;width:270px;height:64px;background:#d9eac0;"></div>
<div class="r" style="left:2551px;top:848px;width:240px;height:64px;background:#d9eac0;"></div>
<div class="t" style="left:93.2px;top:866.05px;font-size:28px;line-height:28px;color:#2f6b4b;font-weight:700;letter-spacing:0.3px;">Done</div>
<svg class="r" style="left:312px;top:876px;" width="16" height="8" viewBox="0 0 16 8"><path d="M0 0 H16 L8.0 8 Z" fill="#5f8a34"/></svg>
<div class="t" style="left:348px;top:866.05px;font-size:28px;line-height:28px;color:#2f6b4b;font-weight:700;letter-spacing:-1.5px;">Yes</div>
<svg class="r" style="left:518px;top:876px;" width="16" height="8" viewBox="0 0 16 8"><path d="M0 0 H16 L8.0 8 Z" fill="#5f8a34"/></svg>
<div class="t" style="left:553.5px;top:866.05px;font-size:28px;line-height:28px;color:#000000;font-weight:700;letter-spacing:-0.417px;">Account</div>
<div class="t" style="left:948.8px;top:865.55px;font-size:28px;line-height:28px;color:#000000;font-weight:400;letter-spacing:0.282px;">Persoonlijke informatie - Motivatie</div>
<div class="t" style="left:1773.9px;top:866.05px;font-size:28px;line-height:28px;color:#2b57c7;font-weight:700;letter-spacing:-0.2px;">Link</div>
<div class="r" style="left:1774px;top:891px;width:57px;height:2px;background:#1745c4;"></div>
<div class="t" style="left:2032.75px;top:866.05px;font-size:28px;line-height:28px;color:#2356a5;font-weight:700;letter-spacing:-0.5px;">All devices</div>
<svg class="r" style="left:2252px;top:876px;" width="16" height="8" viewBox="0 0 16 8"><path d="M0 0 H16 L8.0 8 Z" fill="#356ba3"/></svg>
<div class="t" style="left:2288.3px;top:866.05px;font-size:28px;line-height:28px;color:#2f6b4b;font-weight:700;letter-spacing:-0.68px;">3. Low</div>
<svg class="r" style="left:2522px;top:876px;" width="16" height="8" viewBox="0 0 16 8"><path d="M0 0 H16 L8.0 8 Z" fill="#5f8a34"/></svg>
<div class="t" style="left:2557.5px;top:866.05px;font-size:28px;line-height:28px;color:#2f6b4b;font-weight:700;letter-spacing:-1.5px;">Easy</div>
<svg class="r" style="left:2762px;top:876px;" width="16" height="8" viewBox="0 0 16 8"><path d="M0 0 H16 L8.0 8 Z" fill="#5f8a34"/></svg>
<div class="r" style="left:0px;top:912px;width:86px;height:64px;background:#e6f4ea;"></div>
<div class="t" style="left:0;width:82px;text-align:center;top:934.10px;font-size:21.5px;line-height:21.5px;color:#444746;">10</div>
<div class="r" style="left:87px;top:912px;width:254px;height:64px;background:#d9eac0;"></div>
<div class="r" style="left:341px;top:912px;width:206px;height:64px;background:#d9eac0;"></div>
<div class="r" style="left:2027px;top:912px;width:254px;height:64px;background:#c5dff3;"></div>
<div class="r" style="left:2281px;top:912px;width:270px;height:64px;background:#c5dff3;"></div>
<div class="r" style="left:2551px;top:912px;width:240px;height:64px;background:#fce5a6;"></div>
<div class="t" style="left:93.2px;top:930.05px;font-size:28px;line-height:28px;color:#2f6b4b;font-weight:700;letter-spacing:0.3px;">Done</div>
<svg class="r" style="left:312px;top:940px;" width="16" height="8" viewBox="0 0 16 8"><path d="M0 0 H16 L8.0 8 Z" fill="#5f8a34"/></svg>
<div class="t" style="left:348px;top:930.05px;font-size:28px;line-height:28px;color:#2f6b4b;font-weight:700;letter-spacing:-1.5px;">Yes</div>
<svg class="r" style="left:518px;top:940px;" width="16" height="8" viewBox="0 0 16 8"><path d="M0 0 H16 L8.0 8 Z" fill="#5f8a34"/></svg>
<div class="t" style="left:553.5px;top:930.05px;font-size:28px;line-height:28px;color:#000000;font-weight:700;letter-spacing:-0.417px;">Account</div>
<div class="t" style="left:948.8px;top:929.55px;font-size:28px;line-height:28px;color:#000000;font-weight:400;letter-spacing:0.047px;">Beheercentrum - Winkelassistent</div>
<div class="t" style="left:1773.9px;top:930.05px;font-size:28px;line-height:28px;color:#2b57c7;font-weight:700;letter-spacing:-0.2px;">Link</div>
<div class="r" style="left:1774px;top:955px;width:57px;height:2px;background:#1745c4;"></div>
<div class="t" style="left:2032.75px;top:930.05px;font-size:28px;line-height:28px;color:#2356a5;font-weight:700;letter-spacing:-0.5px;">All devices</div>
<svg class="r" style="left:2252px;top:940px;" width="16" height="8" viewBox="0 0 16 8"><path d="M0 0 H16 L8.0 8 Z" fill="#356ba3"/></svg>
<div class="t" style="left:2288px;top:930.05px;font-size:28px;line-height:28px;color:#2356a5;font-weight:700;letter-spacing:0.365px;">4. Opportunity</div>
<svg class="r" style="left:2522px;top:940px;" width="16" height="8" viewBox="0 0 16 8"><path d="M0 0 H16 L8.0 8 Z" fill="#356ba3"/></svg>
<div class="t" style="left:2557.3px;top:930.05px;font-size:28px;line-height:28px;color:#473821;font-weight:700;letter-spacing:0.286px;">Mediocre</div>
<svg class="r" style="left:2762px;top:940px;" width="16" height="8" viewBox="0 0 16 8"><path d="M0 0 H16 L8.0 8 Z" fill="#a37a26"/></svg>
<div class="r" style="left:0px;top:976px;width:86px;height:64px;background:#e6f4ea;"></div>
<div class="t" style="left:0;width:82px;text-align:center;top:998.10px;font-size:21.5px;line-height:21.5px;color:#444746;">11</div>
<div class="r" style="left:87px;top:976px;width:254px;height:64px;background:#d9eac0;"></div>
<div class="r" style="left:341px;top:976px;width:206px;height:64px;background:#d9eac0;"></div>
<div class="r" style="left:2027px;top:976px;width:254px;height:64px;background:#c5dff3;"></div>
<div class="r" style="left:2281px;top:976px;width:270px;height:64px;background:#d9eac0;"></div>
<div class="r" style="left:2551px;top:976px;width:240px;height:64px;background:#fce5a6;"></div>
<div class="t" style="left:93.2px;top:994.05px;font-size:28px;line-height:28px;color:#2f6b4b;font-weight:700;letter-spacing:0.3px;">Done</div>
<svg class="r" style="left:312px;top:1004px;" width="16" height="8" viewBox="0 0 16 8"><path d="M0 0 H16 L8.0 8 Z" fill="#5f8a34"/></svg>
<div class="t" style="left:348px;top:994.05px;font-size:28px;line-height:28px;color:#2f6b4b;font-weight:700;letter-spacing:-1.5px;">Yes</div>
<svg class="r" style="left:518px;top:1004px;" width="16" height="8" viewBox="0 0 16 8"><path d="M0 0 H16 L8.0 8 Z" fill="#5f8a34"/></svg>
<div class="t" style="left:553.5px;top:994.05px;font-size:28px;line-height:28px;color:#000000;font-weight:700;letter-spacing:-0.036px;">Algemeen</div>
<div class="t" style="left:948.8px;top:993.55px;font-size:28px;line-height:28px;color:#000000;font-weight:400;letter-spacing:0.12px;">Product aanbevelingen</div>
<div class="t" style="left:1773.9px;top:994.05px;font-size:28px;line-height:28px;color:#2b57c7;font-weight:700;letter-spacing:-0.2px;">Link</div>
<div class="r" style="left:1774px;top:1019px;width:57px;height:2px;background:#1745c4;"></div>
<div class="t" style="left:2032.75px;top:994.05px;font-size:28px;line-height:28px;color:#2356a5;font-weight:700;letter-spacing:-0.5px;">All devices</div>
<svg class="r" style="left:2252px;top:1004px;" width="16" height="8" viewBox="0 0 16 8"><path d="M0 0 H16 L8.0 8 Z" fill="#356ba3"/></svg>
<div class="t" style="left:2288.3px;top:994.05px;font-size:28px;line-height:28px;color:#2f6b4b;font-weight:700;letter-spacing:-0.68px;">3. Low</div>
<svg class="r" style="left:2522px;top:1004px;" width="16" height="8" viewBox="0 0 16 8"><path d="M0 0 H16 L8.0 8 Z" fill="#5f8a34"/></svg>
<div class="t" style="left:2557.3px;top:994.05px;font-size:28px;line-height:28px;color:#473821;font-weight:700;letter-spacing:0.286px;">Mediocre</div>
<svg class="r" style="left:2762px;top:1004px;" width="16" height="8" viewBox="0 0 16 8"><path d="M0 0 H16 L8.0 8 Z" fill="#a37a26"/></svg>
<div class="r" style="left:0px;top:1040px;width:86px;height:64px;background:#e6f4ea;"></div>
<div class="t" style="left:0;width:82px;text-align:center;top:1062.10px;font-size:21.5px;line-height:21.5px;color:#444746;">12</div>
<div class="r" style="left:87px;top:1040px;width:254px;height:64px;background:#e2d1f0;"></div>
<div class="r" style="left:341px;top:1040px;width:206px;height:64px;background:#f8d3cd;"></div>
<div class="r" style="left:2027px;top:1040px;width:254px;height:64px;background:#c5dff3;"></div>
<div class="r" style="left:2281px;top:1040px;width:270px;height:64px;background:#d9eac0;"></div>
<div class="r" style="left:2551px;top:1040px;width:240px;height:64px;background:#fce5a6;"></div>
<div class="t" style="left:93.6px;top:1058.05px;font-size:28px;line-height:28px;color:#55308a;font-weight:700;letter-spacing:0.192px;">Not applicable</div>
<svg class="r" style="left:312px;top:1068px;" width="16" height="8" viewBox="0 0 16 8"><path d="M0 0 H16 L8.0 8 Z" fill="#9040d0"/></svg>
<div class="t" style="left:347.1px;top:1058.05px;font-size:28px;line-height:28px;color:#a51f18;font-weight:700;letter-spacing:1.6px;">No</div>
<svg class="r" style="left:518px;top:1068px;" width="16" height="8" viewBox="0 0 16 8"><path d="M0 0 H16 L8.0 8 Z" fill="#c5321f"/></svg>
<div class="t" style="left:553.5px;top:1058.05px;font-size:28px;line-height:28px;color:#000000;font-weight:700;letter-spacing:-0.036px;">Algemeen</div>
<div class="t" style="left:950.1px;top:1057.55px;font-size:28px;line-height:28px;color:#000000;font-weight:400;letter-spacing:0.309px;">Winkelmandje herinnering</div>
<div class="t" style="left:1773.9px;top:1058.05px;font-size:28px;line-height:28px;color:#2b57c7;font-weight:700;letter-spacing:-0.2px;">Link</div>
<div class="r" style="left:1774px;top:1083px;width:57px;height:2px;background:#1745c4;"></div>
<div class="t" style="left:2032.75px;top:1058.05px;font-size:28px;line-height:28px;color:#2356a5;font-weight:700;letter-spacing:-0.5px;">All devices</div>
<svg class="r" style="left:2252px;top:1068px;" width="16" height="8" viewBox="0 0 16 8"><path d="M0 0 H16 L8.0 8 Z" fill="#356ba3"/></svg>
<div class="t" style="left:2288.3px;top:1058.05px;font-size:28px;line-height:28px;color:#2f6b4b;font-weight:700;letter-spacing:-0.68px;">3. Low</div>
<svg class="r" style="left:2522px;top:1068px;" width="16" height="8" viewBox="0 0 16 8"><path d="M0 0 H16 L8.0 8 Z" fill="#5f8a34"/></svg>
<div class="t" style="left:2557.3px;top:1058.05px;font-size:28px;line-height:28px;color:#473821;font-weight:700;letter-spacing:0.286px;">Mediocre</div>
<svg class="r" style="left:2762px;top:1068px;" width="16" height="8" viewBox="0 0 16 8"><path d="M0 0 H16 L8.0 8 Z" fill="#a37a26"/></svg>
<div class="r" style="left:0px;top:1104px;width:86px;height:64px;background:#e6f4ea;"></div>
<div class="t" style="left:0;width:82px;text-align:center;top:1126.10px;font-size:21.5px;line-height:21.5px;color:#444746;">13</div>
<div class="r" style="left:87px;top:1104px;width:254px;height:64px;background:#fce5a6;"></div>
<div class="r" style="left:341px;top:1104px;width:206px;height:64px;background:#d9eac0;"></div>
<div class="r" style="left:2027px;top:1104px;width:254px;height:64px;background:#e2d1f0;"></div>
<div class="r" style="left:2281px;top:1104px;width:270px;height:64px;background:#f8d3cd;"></div>
<div class="r" style="left:2551px;top:1104px;width:240px;height:64px;background:#d9eac0;"></div>
<div class="t" style="left:93px;top:1122.05px;font-size:28px;line-height:28px;color:#473821;font-weight:700;letter-spacing:-0.325px;">In progress</div>
<svg class="r" style="left:312px;top:1132px;" width="16" height="8" viewBox="0 0 16 8"><path d="M0 0 H16 L8.0 8 Z" fill="#a37a26"/></svg>
<div class="t" style="left:348px;top:1122.05px;font-size:28px;line-height:28px;color:#2f6b4b;font-weight:700;letter-spacing:-1.5px;">Yes</div>
<svg class="r" style="left:518px;top:1132px;" width="16" height="8" viewBox="0 0 16 8"><path d="M0 0 H16 L8.0 8 Z" fill="#5f8a34"/></svg>
<div class="t" style="left:553.5px;top:1122.05px;font-size:28px;line-height:28px;color:#000000;font-weight:700;letter-spacing:-0.036px;">Algemeen</div>
<div class="t" style="left:948.1px;top:1121.55px;font-size:28px;line-height:28px;color:#000000;font-weight:400;letter-spacing:0.259px;">Inschrijven nieuwsbrief</div>
<div class="t" style="left:1773.9px;top:1122.05px;font-size:28px;line-height:28px;color:#2b57c7;font-weight:700;letter-spacing:-0.2px;">Link</div>
<div class="r" style="left:1774px;top:1147px;width:57px;height:2px;background:#1745c4;"></div>
<div class="t" style="left:2033.3px;top:1122.05px;font-size:28px;line-height:28px;color:#55308a;font-weight:700;letter-spacing:0.58px;">Mobile</div>
<svg class="r" style="left:2252px;top:1132px;" width="16" height="8" viewBox="0 0 16 8"><path d="M0 0 H16 L8.0 8 Z" fill="#9040d0"/></svg>
<div class="t" style="left:2288.3px;top:1122.05px;font-size:28px;line-height:28px;color:#a51f18;font-weight:700;letter-spacing:-0.217px;">1. High</div>
<svg class="r" style="left:2522px;top:1132px;" width="16" height="8" viewBox="0 0 16 8"><path d="M0 0 H16 L8.0 8 Z" fill="#c5321f"/></svg>
<div class="t" style="left:2557.5px;top:1122.05px;font-size:28px;line-height:28px;color:#2f6b4b;font-weight:700;letter-spacing:-1.5px;">Easy</div>
<svg class="r" style="left:2762px;top:1132px;" width="16" height="8" viewBox="0 0 16 8"><path d="M0 0 H16 L8.0 8 Z" fill="#5f8a34"/></svg>
<div class="r" style="left:0px;top:1168px;width:86px;height:64px;background:#e6f4ea;"></div>
<div class="t" style="left:0;width:82px;text-align:center;top:1190.10px;font-size:21.5px;line-height:21.5px;color:#444746;">14</div>
<div class="r" style="left:87px;top:1168px;width:254px;height:64px;background:#fce5a6;"></div>
<div class="r" style="left:341px;top:1168px;width:206px;height:64px;background:#d9eac0;"></div>
<div class="r" style="left:2027px;top:1168px;width:254px;height:64px;background:#e2d1f0;"></div>
<div class="r" style="left:2281px;top:1168px;width:270px;height:64px;background:#f8d3cd;"></div>
<div class="r" style="left:2551px;top:1168px;width:240px;height:64px;background:#d9eac0;"></div>
<div class="t" style="left:93px;top:1186.05px;font-size:28px;line-height:28px;color:#473821;font-weight:700;letter-spacing:-0.325px;">In progress</div>
<svg class="r" style="left:312px;top:1196px;" width="16" height="8" viewBox="0 0 16 8"><path d="M0 0 H16 L8.0 8 Z" fill="#a37a26"/></svg>
<div class="t" style="left:348px;top:1186.05px;font-size:28px;line-height:28px;color:#2f6b4b;font-weight:700;letter-spacing:-1.5px;">Yes</div>
<svg class="r" style="left:518px;top:1196px;" width="16" height="8" viewBox="0 0 16 8"><path d="M0 0 H16 L8.0 8 Z" fill="#5f8a34"/></svg>
<div class="t" style="left:553.5px;top:1186.05px;font-size:28px;line-height:28px;color:#000000;font-weight:700;letter-spacing:-0.036px;">Algemeen</div>
<div class="t" style="left:948.1px;top:1185.55px;font-size:28px;line-height:28px;color:#000000;font-weight:400;letter-spacing:0.03px;">Lichtadvies</div>
<div class="t" style="left:1773.9px;top:1186.05px;font-size:28px;line-height:28px;color:#2b57c7;font-weight:700;letter-spacing:-0.2px;">Link</div>
<div class="r" style="left:1774px;top:1211px;width:57px;height:2px;background:#1745c4;"></div>
<div class="t" style="left:2033.3px;top:1186.05px;font-size:28px;line-height:28px;color:#55308a;font-weight:700;letter-spacing:0.58px;">Mobile</div>
<svg class="r" style="left:2252px;top:1196px;" width="16" height="8" viewBox="0 0 16 8"><path d="M0 0 H16 L8.0 8 Z" fill="#9040d0"/></svg>
<div class="t" style="left:2288.3px;top:1186.05px;font-size:28px;line-height:28px;color:#a51f18;font-weight:700;letter-spacing:-0.217px;">1. High</div>
<svg class="r" style="left:2522px;top:1196px;" width="16" height="8" viewBox="0 0 16 8"><path d="M0 0 H16 L8.0 8 Z" fill="#c5321f"/></svg>
<div class="t" style="left:2557.5px;top:1186.05px;font-size:28px;line-height:28px;color:#2f6b4b;font-weight:700;letter-spacing:-1.5px;">Easy</div>
<svg class="r" style="left:2762px;top:1196px;" width="16" height="8" viewBox="0 0 16 8"><path d="M0 0 H16 L8.0 8 Z" fill="#5f8a34"/></svg>
<div class="r" style="left:0px;top:1232px;width:86px;height:64px;background:#e6f4ea;"></div>
<div class="t" style="left:0;width:82px;text-align:center;top:1254.10px;font-size:21.5px;line-height:21.5px;color:#444746;">15</div>
<div class="r" style="left:87px;top:1232px;width:254px;height:64px;background:#e6e6e6;"></div>
<div class="r" style="left:341px;top:1232px;width:206px;height:64px;background:#e6e6e6;"></div>
<div class="r" style="left:2027px;top:1232px;width:254px;height:64px;background:#c5dff3;"></div>
<div class="r" style="left:2281px;top:1232px;width:270px;height:64px;background:#f8d3cd;"></div>
<div class="r" style="left:2551px;top:1232px;width:240px;height:64px;background:#fce5a6;"></div>
<div class="t" style="left:93px;top:1250.05px;font-size:28px;line-height:28px;color:#3d3d3d;font-weight:700;letter-spacing:0.0px;">On hold</div>
<svg class="r" style="left:312px;top:1260px;" width="16" height="8" viewBox="0 0 16 8"><path d="M0 0 H16 L8.0 8 Z" fill="#8e8e8e"/></svg>
<div class="t" style="left:348.25px;top:1250.05px;font-size:28px;line-height:28px;color:#3d3d3d;font-weight:700;letter-spacing:-0.188px;">Undecided</div>
<svg class="r" style="left:518px;top:1260px;" width="16" height="8" viewBox="0 0 16 8"><path d="M0 0 H16 L8.0 8 Z" fill="#8e8e8e"/></svg>
<div class="t" style="left:553.25px;top:1250.05px;font-size:28px;line-height:28px;color:#000000;font-weight:700;letter-spacing:0.075px;">Categorieën</div>
<div class="t" style="left:949.1px;top:1249.55px;font-size:28px;line-height:28px;color:#000000;font-weight:400;letter-spacing:0.189px;">Categorieën zonder producten</div>
<div class="t" style="left:1773.9px;top:1250.05px;font-size:28px;line-height:28px;color:#2b57c7;font-weight:700;letter-spacing:-0.2px;">Link</div>
<div class="r" style="left:1774px;top:1275px;width:57px;height:2px;background:#1745c4;"></div>
<div class="t" style="left:2032.75px;top:1250.05px;font-size:28px;line-height:28px;color:#2356a5;font-weight:700;letter-spacing:-0.5px;">All devices</div>
<svg class="r" style="left:2252px;top:1260px;" width="16" height="8" viewBox="0 0 16 8"><path d="M0 0 H16 L8.0 8 Z" fill="#356ba3"/></svg>
<div class="t" style="left:2288.3px;top:1250.05px;font-size:28px;line-height:28px;color:#a51f18;font-weight:700;letter-spacing:-0.217px;">1. High</div>
<svg class="r" style="left:2522px;top:1260px;" width="16" height="8" viewBox="0 0 16 8"><path d="M0 0 H16 L8.0 8 Z" fill="#c5321f"/></svg>
<div class="t" style="left:2557.3px;top:1250.05px;font-size:28px;line-height:28px;color:#473821;font-weight:700;letter-spacing:0.286px;">Mediocre</div>
<svg class="r" style="left:2762px;top:1260px;" width="16" height="8" viewBox="0 0 16 8"><path d="M0 0 H16 L8.0 8 Z" fill="#a37a26"/></svg>
<div class="r" style="left:0px;top:1296px;width:86px;height:64px;background:#e6f4ea;"></div>
<div class="t" style="left:0;width:82px;text-align:center;top:1318.10px;font-size:21.5px;line-height:21.5px;color:#444746;">16</div>
<div class="r" style="left:87px;top:1296px;width:254px;height:64px;background:#e6e6e6;"></div>
<div class="r" style="left:341px;top:1296px;width:206px;height:64px;background:#e6e6e6;"></div>
<div class="r" style="left:2027px;top:1296px;width:254px;height:64px;background:#e2d1f0;"></div>
<div class="r" style="left:2281px;top:1296px;width:270px;height:64px;background:#fce5a6;"></div>
<div class="r" style="left:2551px;top:1296px;width:240px;height:64px;background:#d9eac0;"></div>
<div class="t" style="left:93px;top:1314.05px;font-size:28px;line-height:28px;color:#3d3d3d;font-weight:700;letter-spacing:0.0px;">On hold</div>
<svg class="r" style="left:312px;top:1324px;" width="16" height="8" viewBox="0 0 16 8"><path d="M0 0 H16 L8.0 8 Z" fill="#8e8e8e"/></svg>
<div class="t" style="left:348.25px;top:1314.05px;font-size:28px;line-height:28px;color:#3d3d3d;font-weight:700;letter-spacing:-0.188px;">Undecided</div>
<svg class="r" style="left:518px;top:1324px;" width="16" height="8" viewBox="0 0 16 8"><path d="M0 0 H16 L8.0 8 Z" fill="#8e8e8e"/></svg>
<div class="t" style="left:553.25px;top:1314.05px;font-size:28px;line-height:28px;color:#000000;font-weight:700;letter-spacing:0.075px;">Categorieën</div>
<div class="t" style="left:949.1px;top:1313.55px;font-size:28px;line-height:28px;color:#000000;font-weight:400;letter-spacing:0.157px;">Categorietitels</div>
<div class="t" style="left:1773.9px;top:1314.05px;font-size:28px;line-height:28px;color:#2b57c7;font-weight:700;letter-spacing:-0.2px;">Link</div>
<div class="r" style="left:1774px;top:1339px;width:57px;height:2px;background:#1745c4;"></div>
<div class="t" style="left:2033.3px;top:1314.05px;font-size:28px;line-height:28px;color:#55308a;font-weight:700;letter-spacing:0.58px;">Mobile</div>
<svg class="r" style="left:2252px;top:1324px;" width="16" height="8" viewBox="0 0 16 8"><path d="M0 0 H16 L8.0 8 Z" fill="#9040d0"/></svg>
<div class="t" style="left:2287px;top:1314.05px;font-size:28px;line-height:28px;color:#473821;font-weight:700;letter-spacing:0.387px;">2. Medium</div>
<svg class="r" style="left:2522px;top:1324px;" width="16" height="8" viewBox="0 0 16 8"><path d="M0 0 H16 L8.0 8 Z" fill="#a37a26"/></svg>
<div class="t" style="left:2557.5px;top:1314.05px;font-size:28px;line-height:28px;color:#2f6b4b;font-weight:700;letter-spacing:-1.5px;">Easy</div>
<svg class="r" style="left:2762px;top:1324px;" width="16" height="8" viewBox="0 0 16 8"><path d="M0 0 H16 L8.0 8 Z" fill="#5f8a34"/></svg>
<div class="r" style="left:0px;top:1360px;width:86px;height:64px;background:#e6f4ea;"></div>
<div class="t" style="left:0;width:82px;text-align:center;top:1382.10px;font-size:21.5px;line-height:21.5px;color:#444746;">17</div>
<div class="r" style="left:87px;top:1360px;width:254px;height:64px;background:#d9eac0;"></div>
<div class="r" style="left:341px;top:1360px;width:206px;height:64px;background:#d9eac0;"></div>
<div class="r" style="left:2027px;top:1360px;width:254px;height:64px;background:#c5dff3;"></div>
<div class="r" style="left:2281px;top:1360px;width:270px;height:64px;background:#fce5a6;"></div>
<div class="r" style="left:2551px;top:1360px;width:240px;height:64px;background:#d9eac0;"></div>
<div class="t" style="left:93.2px;top:1378.05px;font-size:28px;line-height:28px;color:#2f6b4b;font-weight:700;letter-spacing:0.3px;">Done</div>
<svg class="r" style="left:312px;top:1388px;" width="16" height="8" viewBox="0 0 16 8"><path d="M0 0 H16 L8.0 8 Z" fill="#5f8a34"/></svg>
<div class="t" style="left:348px;top:1378.05px;font-size:28px;line-height:28px;color:#2f6b4b;font-weight:700;letter-spacing:-1.5px;">Yes</div>
<svg class="r" style="left:518px;top:1388px;" width="16" height="8" viewBox="0 0 16 8"><path d="M0 0 H16 L8.0 8 Z" fill="#5f8a34"/></svg>
<div class="t" style="left:553.3px;top:1378.05px;font-size:28px;line-height:28px;color:#000000;font-weight:700;letter-spacing:-0.171px;">Checkout</div>
<div class="t" style="left:948.1px;top:1377.55px;font-size:28px;line-height:28px;color:#000000;font-weight:400;letter-spacing:-0.019px;">Informatiegegevens - Voorvoegsel</div>
<div class="t" style="left:1773.9px;top:1378.05px;font-size:28px;line-height:28px;color:#2b57c7;font-weight:700;letter-spacing:-0.2px;">Link</div>
<div class="r" style="left:1774px;top:1403px;width:57px;height:2px;background:#1745c4;"></div>
<div class="t" style="left:2032.75px;top:1378.05px;font-size:28px;line-height:28px;color:#2356a5;font-weight:700;letter-spacing:-0.5px;">All devices</div>
<svg class="r" style="left:2252px;top:1388px;" width="16" height="8" viewBox="0 0 16 8"><path d="M0 0 H16 L8.0 8 Z" fill="#356ba3"/></svg>
<div class="t" style="left:2287px;top:1378.05px;font-size:28px;line-height:28px;color:#473821;font-weight:700;letter-spacing:0.387px;">2. Medium</div>
<svg class="r" style="left:2522px;top:1388px;" width="16" height="8" viewBox="0 0 16 8"><path d="M0 0 H16 L8.0 8 Z" fill="#a37a26"/></svg>
<div class="t" style="left:2557.5px;top:1378.05px;font-size:28px;line-height:28px;color:#2f6b4b;font-weight:700;letter-spacing:-1.5px;">Easy</div>
<svg class="r" style="left:2762px;top:1388px;" width="16" height="8" viewBox="0 0 16 8"><path d="M0 0 H16 L8.0 8 Z" fill="#5f8a34"/></svg>
<div class="r" style="left:0px;top:1424px;width:86px;height:64px;background:#e6f4ea;"></div>
<div class="t" style="left:0;width:82px;text-align:center;top:1446.10px;font-size:21.5px;line-height:21.5px;color:#444746;">18</div>
<div class="r" style="left:87px;top:1424px;width:254px;height:64px;background:#d9eac0;"></div>
<div class="r" style="left:341px;top:1424px;width:206px;height:64px;background:#d9eac0;"></div>
<div class="r" style="left:2027px;top:1424px;width:254px;height:64px;background:#f6cbad;"></div>
<div class="r" style="left:2281px;top:1424px;width:270px;height:64px;background:#fce5a6;"></div>
<div class="r" style="left:2551px;top:1424px;width:240px;height:64px;background:#d9eac0;"></div>
<div class="t" style="left:93.2px;top:1442.05px;font-size:28px;line-height:28px;color:#2f6b4b;font-weight:700;letter-spacing:0.3px;">Done</div>
<svg class="r" style="left:312px;top:1452px;" width="16" height="8" viewBox="0 0 16 8"><path d="M0 0 H16 L8.0 8 Z" fill="#5f8a34"/></svg>
<div class="t" style="left:348px;top:1442.05px;font-size:28px;line-height:28px;color:#2f6b4b;font-weight:700;letter-spacing:-1.5px;">Yes</div>
<svg class="r" style="left:518px;top:1452px;" width="16" height="8" viewBox="0 0 16 8"><path d="M0 0 H16 L8.0 8 Z" fill="#5f8a34"/></svg>
<div class="t" style="left:553.3px;top:1442.05px;font-size:28px;line-height:28px;color:#000000;font-weight:700;letter-spacing:-0.171px;">Checkout</div>
<div class="t" style="left:950.1px;top:1441.55px;font-size:28px;line-height:28px;color:#000000;font-weight:400;letter-spacing:0.312px;">Afleiding</div>
<div class="t" style="left:1773.9px;top:1442.05px;font-size:28px;line-height:28px;color:#2b57c7;font-weight:700;letter-spacing:-0.2px;">Link</div>
<div class="r" style="left:1774px;top:1467px;width:57px;height:2px;background:#1745c4;"></div>
<div class="t" style="left:2032.5px;top:1442.05px;font-size:28px;line-height:28px;color:#6b3a10;font-weight:700;letter-spacing:0.167px;">Desktop</div>
<svg class="r" style="left:2252px;top:1452px;" width="16" height="8" viewBox="0 0 16 8"><path d="M0 0 H16 L8.0 8 Z" fill="#a8461e"/></svg>
<div class="t" style="left:2287px;top:1442.05px;font-size:28px;line-height:28px;color:#473821;font-weight:700;letter-spacing:0.387px;">2. Medium</div>
<svg class="r" style="left:2522px;top:1452px;" width="16" height="8" viewBox="0 0 16 8"><path d="M0 0 H16 L8.0 8 Z" fill="#a37a26"/></svg>
<div class="t" style="left:2557.5px;top:1442.05px;font-size:28px;line-height:28px;color:#2f6b4b;font-weight:700;letter-spacing:-1.5px;">Easy</div>
<svg class="r" style="left:2762px;top:1452px;" width="16" height="8" viewBox="0 0 16 8"><path d="M0 0 H16 L8.0 8 Z" fill="#5f8a34"/></svg>
<div class="r" style="left:0px;top:1488px;width:86px;height:64px;background:#e6f4ea;"></div>
<div class="t" style="left:0;width:82px;text-align:center;top:1510.10px;font-size:21.5px;line-height:21.5px;color:#444746;">19</div>
<div class="r" style="left:87px;top:1488px;width:254px;height:64px;background:#d9eac0;"></div>
<div class="r" style="left:341px;top:1488px;width:206px;height:64px;background:#d9eac0;"></div>
<div class="r" style="left:2027px;top:1488px;width:254px;height:64px;background:#e2d1f0;"></div>
<div class="r" style="left:2281px;top:1488px;width:270px;height:64px;background:#fce5a6;"></div>
<div class="r" style="left:2551px;top:1488px;width:240px;height:64px;background:#d9eac0;"></div>
<div class="t" style="left:93.2px;top:1506.05px;font-size:28px;line-height:28px;color:#2f6b4b;font-weight:700;letter-spacing:0.3px;">Done</div>
<svg class="r" style="left:312px;top:1516px;" width="16" height="8" viewBox="0 0 16 8"><path d="M0 0 H16 L8.0 8 Z" fill="#5f8a34"/></svg>
<div class="t" style="left:348px;top:1506.05px;font-size:28px;line-height:28px;color:#2f6b4b;font-weight:700;letter-spacing:-1.5px;">Yes</div>
<svg class="r" style="left:518px;top:1516px;" width="16" height="8" viewBox="0 0 16 8"><path d="M0 0 H16 L8.0 8 Z" fill="#5f8a34"/></svg>
<div class="t" style="left:553.3px;top:1506.05px;font-size:28px;line-height:28px;color:#000000;font-weight:700;letter-spacing:-0.171px;">Checkout</div>
<div class="t" style="left:948.1px;top:1505.55px;font-size:28px;line-height:28px;color:#000000;font-weight:400;letter-spacing:0.889px;">Uitlijning</div>
<div class="t" style="left:1773.9px;top:1506.05px;font-size:28px;line-height:28px;color:#2b57c7;font-weight:700;letter-spacing:-0.2px;">Link</div>
<div class="r" style="left:1774px;top:1531px;width:57px;height:2px;background:#1745c4;"></div>
<div class="t" style="left:2033.3px;top:1506.05px;font-size:28px;line-height:28px;color:#55308a;font-weight:700;letter-spacing:0.58px;">Mobile</div>
<svg class="r" style="left:2252px;top:1516px;" width="16" height="8" viewBox="0 0 16 8"><path d="M0 0 H16 L8.0 8 Z" fill="#9040d0"/></svg>
<div class="t" style="left:2287px;top:1506.05px;font-size:28px;line-height:28px;color:#473821;font-weight:700;letter-spacing:0.387px;">2. Medium</div>
<svg class="r" style="left:2522px;top:1516px;" width="16" height="8" viewBox="0 0 16 8"><path d="M0 0 H16 L8.0 8 Z" fill="#a37a26"/></svg>
<div class="t" style="left:2557.5px;top:1506.05px;font-size:28px;line-height:28px;color:#2f6b4b;font-weight:700;letter-spacing:-1.5px;">Easy</div>
<svg class="r" style="left:2762px;top:1516px;" width="16" height="8" viewBox="0 0 16 8"><path d="M0 0 H16 L8.0 8 Z" fill="#5f8a34"/></svg>
<div class="r" style="left:0px;top:1552px;width:86px;height:64px;background:#e6f4ea;"></div>
<div class="t" style="left:0;width:82px;text-align:center;top:1574.10px;font-size:21.5px;line-height:21.5px;color:#444746;">20</div>
<div class="r" style="left:87px;top:1552px;width:254px;height:64px;background:#d9eac0;"></div>
<div class="r" style="left:341px;top:1552px;width:206px;height:64px;background:#d9eac0;"></div>
<div class="r" style="left:2027px;top:1552px;width:254px;height:64px;background:#c5dff3;"></div>
<div class="r" style="left:2281px;top:1552px;width:270px;height:64px;background:#d9eac0;"></div>
<div class="r" style="left:2551px;top:1552px;width:240px;height:64px;background:#fce5a6;"></div>
<div class="t" style="left:93.2px;top:1570.05px;font-size:28px;line-height:28px;color:#2f6b4b;font-weight:700;letter-spacing:0.3px;">Done</div>
<svg class="r" style="left:312px;top:1580px;" width="16" height="8" viewBox="0 0 16 8"><path d="M0 0 H16 L8.0 8 Z" fill="#5f8a34"/></svg>
<div class="t" style="left:348px;top:1570.05px;font-size:28px;line-height:28px;color:#2f6b4b;font-weight:700;letter-spacing:-1.5px;">Yes</div>
<svg class="r" style="left:518px;top:1580px;" width="16" height="8" viewBox="0 0 16 8"><path d="M0 0 H16 L8.0 8 Z" fill="#5f8a34"/></svg>
<div class="t" style="left:553.3px;top:1570.05px;font-size:28px;line-height:28px;color:#000000;font-weight:700;letter-spacing:-0.171px;">Checkout</div>
<div class="t" style="left:948.1px;top:1569.55px;font-size:28px;line-height:28px;color:#000000;font-weight:400;letter-spacing:0.01px;">Informatiegegevens - Zakelijk vs particuler</div>
<div class="t" style="left:1773.9px;top:1570.05px;font-size:28px;line-height:28px;color:#2b57c7;font-weight:700;letter-spacing:-0.2px;">Link</div>
<div class="r" style="left:1774px;top:1595px;width:57px;height:2px;background:#1745c4;"></div>
<div class="t" style="left:2032.75px;top:1570.05px;font-size:28px;line-height:28px;color:#2356a5;font-weight:700;letter-spacing:-0.5px;">All devices</div>
<svg class="r" style="left:2252px;top:1580px;" width="16" height="8" viewBox="0 0 16 8"><path d="M0 0 H16 L8.0 8 Z" fill="#356ba3"/></svg>
<div class="t" style="left:2288.3px;top:1570.05px;font-size:28px;line-height:28px;color:#2f6b4b;font-weight:700;letter-spacing:-0.68px;">3. Low</div>
<svg class="r" style="left:2522px;top:1580px;" width="16" height="8" viewBox="0 0 16 8"><path d="M0 0 H16 L8.0 8 Z" fill="#5f8a34"/></svg>
<div class="t" style="left:2557.3px;top:1570.05px;font-size:28px;line-height:28px;color:#473821;font-weight:700;letter-spacing:0.286px;">Mediocre</div>
<svg class="r" style="left:2762px;top:1580px;" width="16" height="8" viewBox="0 0 16 8"><path d="M0 0 H16 L8.0 8 Z" fill="#a37a26"/></svg>
<div class="r" style="left:0px;top:1616px;width:86px;height:64px;background:#e6f4ea;"></div>
<div class="t" style="left:0;width:82px;text-align:center;top:1638.10px;font-size:21.5px;line-height:21.5px;color:#444746;">21</div>
<div class="r" style="left:87px;top:1616px;width:254px;height:64px;background:#e2d1f0;"></div>
<div class="r" style="left:341px;top:1616px;width:206px;height:64px;background:#e6e6e6;"></div>
<div class="r" style="left:2027px;top:1616px;width:254px;height:64px;background:#c5dff3;"></div>
<div class="r" style="left:2281px;top:1616px;width:270px;height:64px;background:#d9eac0;"></div>
<div class="r" style="left:2551px;top:1616px;width:240px;height:64px;background:#d9eac0;"></div>
<div class="t" style="left:93.6px;top:1634.05px;font-size:28px;line-height:28px;color:#55308a;font-weight:700;letter-spacing:0.192px;">Not applicable</div>
<svg class="r" style="left:312px;top:1644px;" width="16" height="8" viewBox="0 0 16 8"><path d="M0 0 H16 L8.0 8 Z" fill="#9040d0"/></svg>
<div class="t" style="left:348.25px;top:1634.05px;font-size:28px;line-height:28px;color:#3d3d3d;font-weight:700;letter-spacing:-0.188px;">Undecided</div>
<svg class="r" style="left:518px;top:1644px;" width="16" height="8" viewBox="0 0 16 8"><path d="M0 0 H16 L8.0 8 Z" fill="#8e8e8e"/></svg>
<div class="t" style="left:553.3px;top:1634.05px;font-size:28px;line-height:28px;color:#000000;font-weight:700;letter-spacing:-0.171px;">Checkout</div>
<div class="t" style="left:948.1px;top:1633.55px;font-size:28px;line-height:28px;color:#000000;font-weight:400;letter-spacing:0.059px;">Informatiegegevens - Tussentitels</div>
<div class="t" style="left:1773.9px;top:1634.05px;font-size:28px;line-height:28px;color:#2b57c7;font-weight:700;letter-spacing:-0.2px;">Link</div>
<div class="r" style="left:1774px;top:1659px;width:57px;height:2px;background:#1745c4;"></div>
<div class="t" style="left:2032.75px;top:1634.05px;font-size:28px;line-height:28px;color:#2356a5;font-weight:700;letter-spacing:-0.5px;">All devices</div>
<svg class="r" style="left:2252px;top:1644px;" width="16" height="8" viewBox="0 0 16 8"><path d="M0 0 H16 L8.0 8 Z" fill="#356ba3"/></svg>
<div class="t" style="left:2288.3px;top:1634.05px;font-size:28px;line-height:28px;color:#2f6b4b;font-weight:700;letter-spacing:-0.68px;">3. Low</div>
<svg class="r" style="left:2522px;top:1644px;" width="16" height="8" viewBox="0 0 16 8"><path d="M0 0 H16 L8.0 8 Z" fill="#5f8a34"/></svg>
<div class="t" style="left:2557.5px;top:1634.05px;font-size:28px;line-height:28px;color:#2f6b4b;font-weight:700;letter-spacing:-1.5px;">Easy</div>
<svg class="r" style="left:2762px;top:1644px;" width="16" height="8" viewBox="0 0 16 8"><path d="M0 0 H16 L8.0 8 Z" fill="#5f8a34"/></svg>
<div class="r" style="left:0px;top:463px;width:86px;height:2px;background:#c7c7c7;"></div>
<div class="r" style="left:0px;top:527px;width:86px;height:2px;background:#c7c7c7;"></div>
<div class="r" style="left:0px;top:591px;width:86px;height:2px;background:#c7c7c7;"></div>
<div class="r" style="left:0px;top:655px;width:86px;height:2px;background:#c7c7c7;"></div>
<div class="r" style="left:0px;top:719px;width:86px;height:2px;background:#c7c7c7;"></div>
<div class="r" style="left:0px;top:783px;width:86px;height:2px;background:#c7c7c7;"></div>
<div class="r" style="left:0px;top:847px;width:86px;height:2px;background:#c7c7c7;"></div>
<div class="r" style="left:0px;top:911px;width:86px;height:2px;background:#c7c7c7;"></div>
<div class="r" style="left:0px;top:975px;width:86px;height:2px;background:#c7c7c7;"></div>
<div class="r" style="left:0px;top:1039px;width:86px;height:2px;background:#c7c7c7;"></div>
<div class="r" style="left:0px;top:1103px;width:86px;height:2px;background:#c7c7c7;"></div>
<div class="r" style="left:0px;top:1167px;width:86px;height:2px;background:#c7c7c7;"></div>
<div class="r" style="left:0px;top:1231px;width:86px;height:2px;background:#c7c7c7;"></div>
<div class="r" style="left:0px;top:1295px;width:86px;height:2px;background:#c7c7c7;"></div>
<div class="r" style="left:0px;top:1359px;width:86px;height:2px;background:#c7c7c7;"></div>
<div class="r" style="left:0px;top:1423px;width:86px;height:2px;background:#c7c7c7;"></div>
<div class="r" style="left:0px;top:1487px;width:86px;height:2px;background:#c7c7c7;"></div>
<div class="r" style="left:0px;top:1551px;width:86px;height:2px;background:#c7c7c7;"></div>
<div class="r" style="left:0px;top:1615px;width:86px;height:2px;background:#c7c7c7;"></div>
<div class="r" style="left:0px;top:1679px;width:86px;height:2px;background:#c7c7c7;"></div>
<svg class="r" style="left:0;top:0" width="3426" height="1676" viewBox="0 0 3426 1676"><path d="M88 464 H3419 M88 528 H3419 M88 592 H3419 M88 656 H3419 M88 720 H3419 M88 784 H3419 M88 848 H3419 M88 912 H3419 M88 976 H3419 M88 1040 H3419 M88 1104 H3419 M88 1168 H3419 M88 1232 H3419 M88 1296 H3419 M88 1360 H3419 M88 1424 H3419 M88 1488 H3419 M88 1552 H3419 M88 1616 H3419 M88 1680 H3419 M341 401 V1676 M547 401 V1676 M943 401 V1676 M1767 401 V1676 M2027 401 V1676 M2281 401 V1676 M2551 401 V1676 M2791 401 V1676" stroke="rgba(0,0,0,0.11)" stroke-width="2" fill="none" shape-rendering="crispEdges"/></svg>
<div class="r" style="left:0px;top:393px;width:3419px;height:8px;background:#c7c7c7;"></div>
<div class="r" style="left:0px;top:391px;width:86px;height:2px;background:#c7c7c7;"></div>
<div class="r" style="left:2280px;top:327px;width:2px;height:66px;background:#2b7d36;"></div>
<div class="r" style="left:2550px;top:327px;width:2px;height:66px;background:#2b7d36;"></div>
<div class="r" style="left:2280px;top:401px;width:2px;height:1275px;background:#2b7d36;"></div>
<div class="r" style="left:2550px;top:401px;width:2px;height:1275px;background:#2b7d36;"></div>
<div class="r" style="left:2280px;top:327px;width:272px;height:2px;background:#2b7d36;"></div>
<div class="r" style="left:88px;top:327px;width:253px;height:4px;background:#3b78e7;"></div>
<div class="r" style="left:88px;top:389px;width:253px;height:4px;background:#3b78e7;"></div>
<div class="r" style="left:88px;top:327px;width:2px;height:65px;background:#3b78e7;"></div>
<div class="r" style="left:338px;top:327px;width:4px;height:66px;background:#3b78e7;"></div>
<div class="r" style="left:332px;top:383.5px;width:15px;height:15px;border-radius:50%;background:#2456d0;border:2.5px solid #fff;"></div>
<div class="r" style="left:0px;top:1675px;width:3419px;height:1px;background:#d4d4d4;"></div>
<div class="r" style="left:3419px;top:279px;width:7px;height:1397px;background:#f8f9fa;"></div>
<div class="r" style="left:3419px;top:279px;width:2px;height:1397px;background:#e1e1e1;"></div>
</body></html>
